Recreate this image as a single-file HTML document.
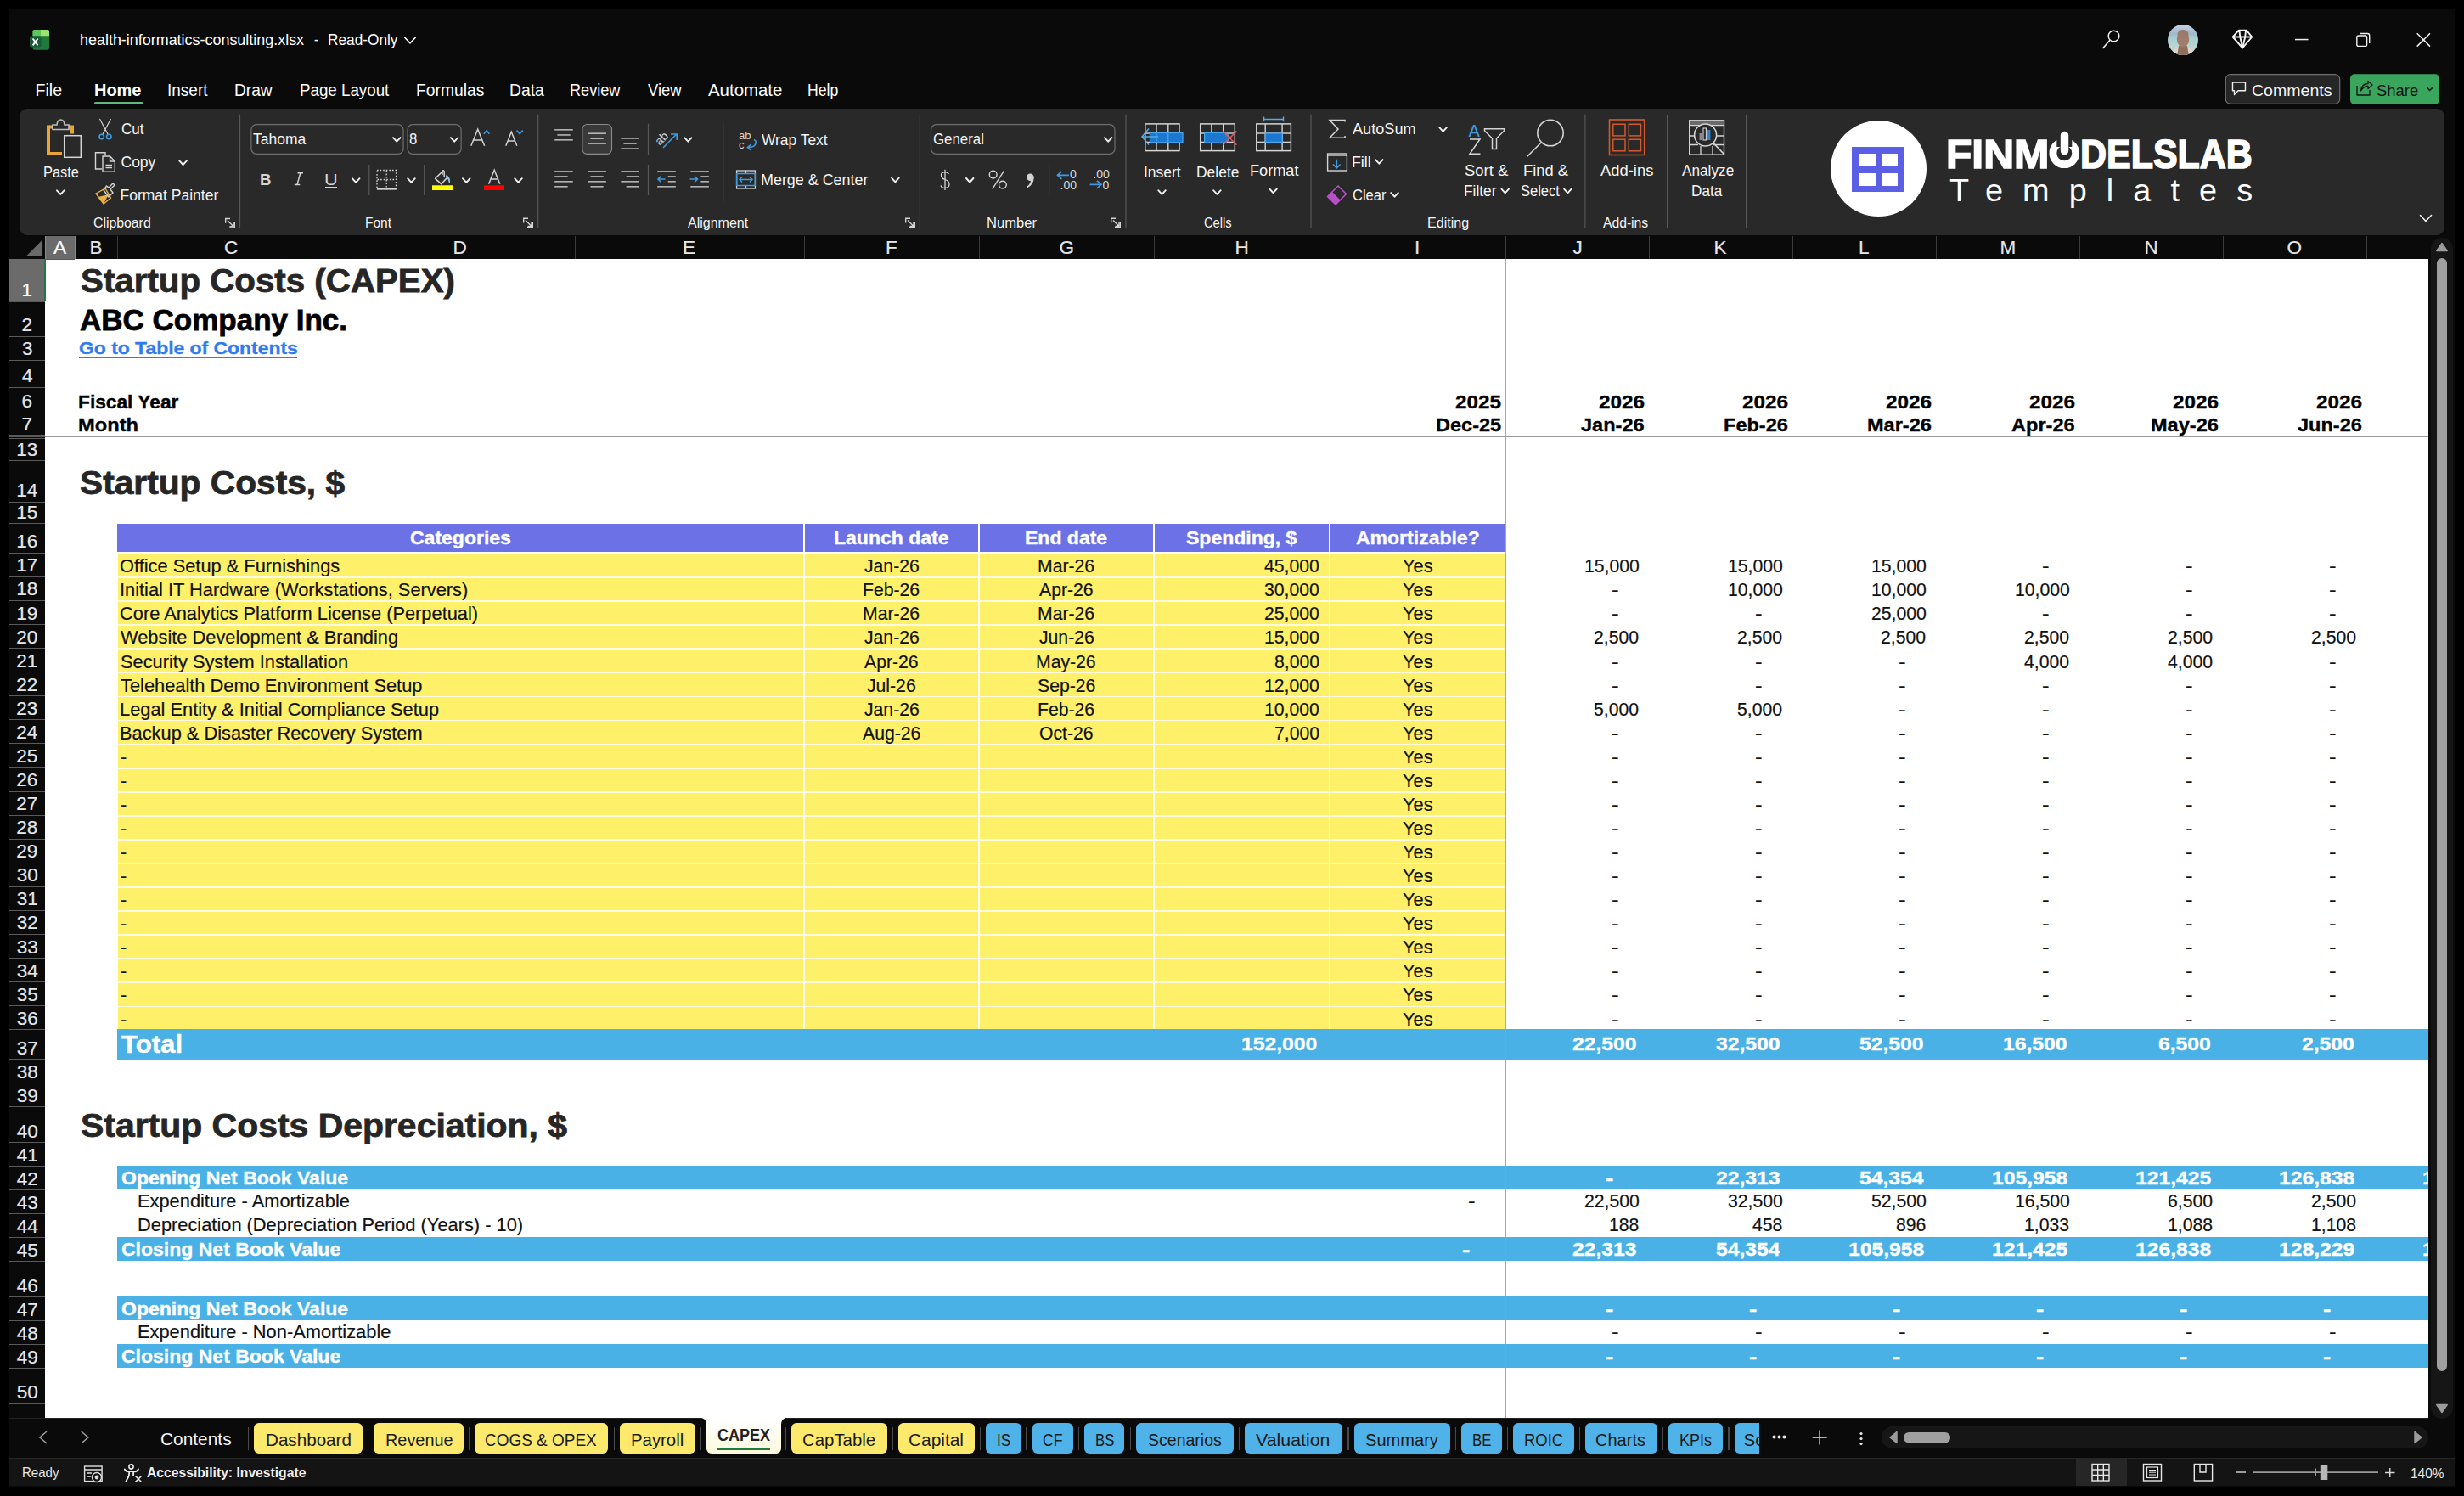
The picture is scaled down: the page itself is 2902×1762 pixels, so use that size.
<!DOCTYPE html><html><head><meta charset="utf-8"><style>html,body{margin:0;padding:0;width:2902px;height:1762px;overflow:hidden;background:#000;position:relative;font-family:"Liberation Sans",sans-serif}</style></head><body>
<div style="position:absolute;left:11.00px;top:11.00px;width:2880.00px;height:1740.00px;background:#0a0a0a;"></div>
<div style="position:absolute;left:23.00px;top:128.00px;width:2856.00px;height:149.00px;background:#292929;border-radius:9px;"></div>
<div style="position:absolute;left:11.00px;top:278.00px;width:2849.00px;height:27.00px;background:#0a0a0a;"></div>
<div style="position:absolute;left:53.00px;top:305.00px;width:2807.00px;height:1365.00px;background:#ffffff;"></div>
<div style="position:absolute;left:11.00px;top:305.00px;width:42.00px;height:1365.00px;background:#0a0a0a;"></div>
<div style="position:absolute;left:11.00px;top:1670.00px;width:2880.00px;height:48.00px;background:#0a0a0a;"></div>
<div style="position:absolute;left:11.00px;top:1718.00px;width:2880.00px;height:32.00px;background:#141414;"></div>
<div style="position:absolute;left:11.00px;top:1717.00px;width:2880.00px;height:1.00px;background:#262626;"></div>
<div style="position:absolute;left:94.38px;top:39.25px;font:normal 17.5px 'Liberation Sans',sans-serif;line-height:17.5px;color:#ffffff;white-space:nowrap;transform:scaleX(1.0246);transform-origin:0 0;">health-informatics-consulting.xlsx</div>
<div style="position:absolute;left:369.70px;top:39.25px;font:normal 17.5px 'Liberation Sans',sans-serif;line-height:17.5px;color:#ffffff;white-space:nowrap;transform:scaleX(0.8333);transform-origin:0 0;">-</div>
<div style="position:absolute;left:385.51px;top:39.25px;font:normal 17.5px 'Liberation Sans',sans-serif;line-height:17.5px;color:#ffffff;white-space:nowrap;transform:scaleX(0.9856);transform-origin:0 0;">Read-Only</div>
<div style="position:absolute;left:41.60px;top:97.25px;font:normal 19.5px 'Liberation Sans',sans-serif;line-height:19.5px;color:#ffffff;white-space:nowrap;">File</div>
<div style="position:absolute;left:110.78px;top:97.25px;font:bold 19.5px 'Liberation Sans',sans-serif;line-height:19.5px;color:#ffffff;white-space:nowrap;transform:scaleX(1.0238);transform-origin:0 0;">Home</div>
<div style="position:absolute;left:197.43px;top:97.25px;font:normal 19.5px 'Liberation Sans',sans-serif;line-height:19.5px;color:#ffffff;white-space:nowrap;transform:scaleX(0.9741);transform-origin:0 0;">Insert</div>
<div style="position:absolute;left:276.22px;top:97.25px;font:normal 19.5px 'Liberation Sans',sans-serif;line-height:19.5px;color:#ffffff;white-space:nowrap;transform:scaleX(0.9819);transform-origin:0 0;">Draw</div>
<div style="position:absolute;left:352.74px;top:97.25px;font:normal 19.5px 'Liberation Sans',sans-serif;line-height:19.5px;color:#ffffff;white-space:nowrap;transform:scaleX(0.9616);transform-origin:0 0;">Page Layout</div>
<div style="position:absolute;left:490.41px;top:97.25px;font:normal 19.5px 'Liberation Sans',sans-serif;line-height:19.5px;color:#ffffff;white-space:nowrap;transform:scaleX(0.9886);transform-origin:0 0;">Formulas</div>
<div style="position:absolute;left:599.51px;top:97.25px;font:normal 19.5px 'Liberation Sans',sans-serif;line-height:19.5px;color:#ffffff;white-space:nowrap;transform:scaleX(0.9890);transform-origin:0 0;">Data</div>
<div style="position:absolute;left:670.57px;top:97.25px;font:normal 19.5px 'Liberation Sans',sans-serif;line-height:19.5px;color:#ffffff;white-space:nowrap;transform:scaleX(0.9302);transform-origin:0 0;">Review</div>
<div style="position:absolute;left:762.50px;top:97.25px;font:normal 19.5px 'Liberation Sans',sans-serif;line-height:19.5px;color:#ffffff;white-space:nowrap;transform:scaleX(0.9432);transform-origin:0 0;">View</div>
<div style="position:absolute;left:834.40px;top:97.25px;font:normal 19.5px 'Liberation Sans',sans-serif;line-height:19.5px;color:#ffffff;white-space:nowrap;transform:scaleX(1.0470);transform-origin:0 0;">Automate</div>
<div style="position:absolute;left:950.60px;top:97.25px;font:normal 19.5px 'Liberation Sans',sans-serif;line-height:19.5px;color:#ffffff;white-space:nowrap;transform:scaleX(0.9042);transform-origin:0 0;">Help</div>
<div style="position:absolute;left:110.80px;top:120.00px;width:58.20px;height:3.20px;background:#5fb87f;border-radius:2px;"></div>
<svg style="position:absolute;left:0.00px;top:0.00px;pointer-events:none;" width="2902" height="130" viewBox="0 0 2902 130"><rect x="38.5" y="35" width="19.5" height="23.8" rx="2.2" fill="#1f7a3c"/><path d="M40.7 35 H47.5 V42.3 H38.5 V37.2 Q38.5 35 40.7 35 Z" fill="#5dc55a"/><path d="M47.5 35 H55.8 Q58 35 58 37.2 V42.3 H47.5 Z" fill="#9be36f"/><rect x="35" y="42.5" width="13.5" height="13" rx="2" fill="#185c37"/><path d="M38.6 45.5 L44.6 53.3 M44.6 45.5 L38.6 53.3" stroke="#fff" stroke-width="1.9"/><path d="M476.5 44 L483 50.8 L489.5 44" fill="none" stroke="#fff" stroke-width="1.6"/><circle cx="2489.5" cy="42.5" r="6.3" fill="none" stroke="#f0f0f0" stroke-width="1.5"/><path d="M2485 47.3 L2476.5 57" stroke="#f0f0f0" stroke-width="1.6"/><defs><linearGradient id="av" x1="0" y1="0" x2="0" y2="1"><stop offset="0" stop-color="#c8d2e6"/><stop offset="0.3" stop-color="#9fb8cc"/><stop offset="0.45" stop-color="#a9cfcf"/><stop offset="1" stop-color="#c8dcd8"/></linearGradient><clipPath id="avc"><circle cx="2571" cy="47" r="18"/></clipPath></defs><g clip-path="url(#avc)"><rect x="2553" y="29" width="36" height="36" fill="url(#av)"/><path d="M2556 66 Q2558 58 2566 56 L2576 56 Q2585 58 2587 66 Z" fill="#ddd3c8"/><path d="M2566 54 L2576 54 L2578 66 L2564 66 Z" fill="#8e6e5e"/><ellipse cx="2571" cy="46" rx="7.2" ry="9.5" fill="#a07c6c"/><ellipse cx="2571" cy="40" rx="6.5" ry="5" fill="#9a7a6c"/></g><path d="M2636.5 35.8 H2646 L2652.3 43.5 L2641.2 56.5 L2629.7 43.5 Z M2629.7 43.5 H2652.3 M2637.5 36 L2638.3 43.5 L2641.2 56.5 L2644.2 43.5 L2645 36" fill="none" stroke="#f4f4f4" stroke-width="1.9" stroke-linejoin="round"/><rect x="2703" y="45.8" width="15.5" height="1.5" fill="#f0f0f0"/><rect x="2775.8" y="42" width="11.8" height="12.4" rx="2" fill="none" stroke="#f0f0f0" stroke-width="1.4"/><path d="M2779 39.5 H2788.5 Q2790.7 39.5 2790.7 41.7 V51" fill="none" stroke="#f0f0f0" stroke-width="1.4"/><path d="M2846.7 39.3 L2862 54.6 M2862 39.3 L2846.7 54.6" stroke="#f0f0f0" stroke-width="1.5"/><rect x="2621.3" y="87.7" width="134.4" height="34.6" rx="5.5" fill="#262626" stroke="#707070" stroke-width="1.2"/><path d="M2629.5 97 H2644.5 V106.8 H2636 L2631.5 111.5 V106.8 H2629.5 Z" fill="none" stroke="#f0f0f0" stroke-width="1.4" stroke-linejoin="round"/><rect x="2768" y="87.2" width="105" height="35.5" rx="5" fill="#3aa55c"/><path d="M2776 101 V112 H2791 V106 M2780.5 107 Q2781.5 98.5 2789 98.5 V95.5 L2794 100 L2789 104.5 V101.5 Q2783.5 101.5 2780.5 107 Z" fill="none" stroke="#141414" stroke-width="1.3" stroke-linejoin="round"/><path d="M2858.3 103 L2861.7 106.5 L2865.1 103" fill="none" stroke="#141414" stroke-width="1.5"/></svg>
<div style="position:absolute;left:2652.00px;top:96.50px;font:normal 19px 'Liberation Sans',sans-serif;line-height:19px;color:#f4f4f4;white-space:nowrap;transform:scaleX(1.0290);transform-origin:0 0;">Comments</div>
<div style="position:absolute;left:2799.00px;top:96.50px;font:normal 19px 'Liberation Sans',sans-serif;line-height:19px;color:#141414;white-space:nowrap;transform:scaleX(0.9714);transform-origin:0 0;">Share</div>
<svg style="position:absolute;left:0.00px;top:0.00px;pointer-events:none;" width="2902" height="300" viewBox="0 0 2902 300"><path d="M58 149.5 H64 M79 149.5 H85 V157.5" fill="none" stroke="#e8a33a" stroke-width="4"/><path d="M57 147.5 V181 H73" fill="none" stroke="#e8a33a" stroke-width="4"/><path d="M62 152.5 V147 H67 Q67.5 141 71.5 141 Q75.5 141 76 147 H81 V152.5 Z" fill="#292929" stroke="#bdbdbd" stroke-width="1.6"/><rect x="75.7" y="159.7" width="19.6" height="25.6" fill="none" stroke="#d4d4d4" stroke-width="1.5"/><path d="M67.0 224.3 L71.3 228.9 L75.6 224.3" fill="none" stroke="#f0f0f0" stroke-width="1.9" stroke-linecap="round" stroke-linejoin="round"/><path d="M117.5 140 L127 158 M130.5 140 L121 158" fill="none" stroke="#d4d4d4" stroke-width="1.2"/><circle cx="119.7" cy="161" r="2.7" fill="none" stroke="#3f9be0" stroke-width="1.6"/><circle cx="128.3" cy="161" r="2.7" fill="none" stroke="#3f9be0" stroke-width="1.6"/><path d="M124 183 V179.7 H112.5 V199 H120" fill="none" stroke="#d4d4d4" stroke-width="1.4"/><path d="M121 184 H129.5 L135.3 190 V202.3 H121 Z M129.5 184 V190 H135.3 M124.5 194.5 H132 M124.5 197.5 H132" fill="none" stroke="#d4d4d4" stroke-width="1.4"/><path d="M113 228 L124 222 L130.5 233 L122 240 Z" fill="none" stroke="#e8b04a" stroke-width="1.4"/><path d="M115.5 232 L128 229 L122 240 Z" fill="#e8b04a"/><path d="M122 224 L128 232 L133 227 L130 223 L135 218 L133 216 L128 221 L125.5 219 Z" fill="none" stroke="#d4d4d4" stroke-width="1.4"/><path d="M211.3 189.4 L215.6 194.0 L219.9 189.4" fill="none" stroke="#f0f0f0" stroke-width="1.9" stroke-linecap="round" stroke-linejoin="round"/><path d="M265.7 262.8 V257.5 H271" fill="none" stroke="#d4d4d4" stroke-width="1.4"/><path d="M276.3 261.8 V268.1 H270" fill="none" stroke="#d4d4d4" stroke-width="1.4"/><path d="M268 259.8 L275 266.8 M275 262.3 V266.8 H270.5" fill="none" stroke="#d4d4d4" stroke-width="1.4"/><rect x="281.9" y="134.6" width="1.2" height="133.9" fill="#575757"/><rect x="295.9" y="146.7" width="179.1" height="34.6" rx="6" fill="none" stroke="#6e6e6e" stroke-width="1.2"/><rect x="480" y="146.7" width="63.1" height="34.6" rx="6" fill="none" stroke="#6e6e6e" stroke-width="1.2"/><path d="M463.0 162.1 L467.3 166.7 L471.6 162.1" fill="none" stroke="#f0f0f0" stroke-width="1.9" stroke-linecap="round" stroke-linejoin="round"/><path d="M530.9 162.1 L535.2 166.7 L539.5 162.1" fill="none" stroke="#f0f0f0" stroke-width="1.9" stroke-linecap="round" stroke-linejoin="round"/><path d="M554.8 171.7 L562.7 152.3 L570.6 171.7 M557.8 165 H567.6" fill="none" stroke="#d4d4d4" stroke-width="1.5"/><path d="M569.8 157.8 L573.1 153.8 L576.4 157.8" fill="none" stroke="#3f9be0" stroke-width="1.6"/><path d="M595.8 171.7 L602.3 155.2 L608.8 171.7 M598.3 166 H606.3" fill="none" stroke="#d4d4d4" stroke-width="1.5"/><path d="M608.6 153.6 L612.2 157.6 L615.8 153.6" fill="none" stroke="#3f9be0" stroke-width="1.6"/><path d="M350.5 203.8 H357 M346.8 217.4 H353.3 M353.8 203.8 L350 217.4" fill="none" stroke="#d4d4d4" stroke-width="1.5"/><path d="M414.9 210.2 L419.2 214.8 L423.5 210.2" fill="none" stroke="#f0f0f0" stroke-width="1.9" stroke-linecap="round" stroke-linejoin="round"/><rect x="434.2" y="194" width="1.2" height="36" fill="#575757"/><rect x="444" y="200.5" width="22.5" height="22" fill="none" stroke="#d4d4d4" stroke-width="1.3" stroke-dasharray="1.6 2"/><path d="M455.2 201 V222 M444.5 211.5 H466" fill="none" stroke="#d4d4d4" stroke-width="1.3" stroke-dasharray="1.6 2"/><rect x="443.9" y="221.6" width="22.9" height="2" fill="#d4d4d4"/><path d="M480.2 210.2 L484.5 214.8 L488.8 210.2" fill="none" stroke="#f0f0f0" stroke-width="1.9" stroke-linecap="round" stroke-linejoin="round"/><rect x="499.1" y="194" width="1.2" height="36" fill="#575757"/><path d="M520.3 202.8 L512.6 210.3 L519.7 216.7 L526.6 209.3" fill="none" stroke="#d4d4d4" stroke-width="1.6" stroke-linejoin="round"/><path d="M521 205.5 V201.8 Q522 199.8 523.2 201.8 V208.5" fill="none" stroke="#d4d4d4" stroke-width="1.5" stroke-linecap="round"/><path d="M525.8 206.4 Q530.3 208.5 529.5 215.5 Q528.2 210.5 525.8 208.3 Z" fill="#8fc3ea" stroke="#8fc3ea" stroke-width="1"/><rect x="509" y="218.3" width="24" height="5.7" fill="#ffff00"/><path d="M545.0 210.2 L549.3 214.8 L553.6 210.2" fill="none" stroke="#f0f0f0" stroke-width="1.9" stroke-linecap="round" stroke-linejoin="round"/><path d="M575.6 216.8 L582.2 200.3 L588.8 216.8 M578 211 H586.4" fill="none" stroke="#d4d4d4" stroke-width="1.5"/><rect x="570" y="218.3" width="24" height="5.7" fill="#ff0000"/><path d="M606.2 210.2 L610.5 214.8 L614.8 210.2" fill="none" stroke="#f0f0f0" stroke-width="1.9" stroke-linecap="round" stroke-linejoin="round"/><path d="M616.7 262.5 V257.2 H622" fill="none" stroke="#d4d4d4" stroke-width="1.4"/><path d="M627.3 261.5 V267.8 H621" fill="none" stroke="#d4d4d4" stroke-width="1.4"/><path d="M619 259.5 L626 266.5 M626 262.0 V266.5 H621.5" fill="none" stroke="#d4d4d4" stroke-width="1.4"/><rect x="633.1" y="134.6" width="1.2" height="133.9" fill="#575757"/><rect x="653.2" y="152.2" width="21.6" height="1.3" fill="#d4d4d4"/><rect x="656.4" y="158.3" width="15.3" height="1.3" fill="#d4d4d4"/><rect x="653.2" y="164.2" width="21.6" height="1.3" fill="#d4d4d4"/><rect x="685.9" y="146.5" width="34.6" height="34.9" rx="5.5" fill="#393939" stroke="#8c8c8c" stroke-width="1.1"/><rect x="692.0" y="156.5" width="21.9" height="1.3" fill="#d4d4d4"/><rect x="695.4" y="162.5" width="15.3" height="1.3" fill="#d4d4d4"/><rect x="692.0" y="168.4" width="21.9" height="1.3" fill="#d4d4d4"/><rect x="731.3" y="162.3" width="21.6" height="1.3" fill="#d4d4d4"/><rect x="734.4" y="168.4" width="15.3" height="1.3" fill="#d4d4d4"/><rect x="731.3" y="174.4" width="21.6" height="1.3" fill="#d4d4d4"/><rect x="762.9" y="145.6" width="1.2" height="36.900000000000006" fill="#575757"/><text x="0" y="0" transform="translate(777 172) rotate(-45)" font-family="Liberation Sans" font-size="14" fill="#d4d4d4">ab</text><path d="M781 174 L797 157.8 M790 158 H797.2 V165" fill="none" stroke="#3f9be0" stroke-width="1.6"/><path d="M806.4 162.3 L810.4 166.7 L814.4 162.3" fill="none" stroke="#f0f0f0" stroke-width="1.9" stroke-linecap="round" stroke-linejoin="round"/><rect x="653.2" y="201.3" width="21.6" height="1.3" fill="#d4d4d4"/><rect x="653.2" y="207.3" width="15.5" height="1.3" fill="#d4d4d4"/><rect x="653.2" y="213.2" width="21.6" height="1.3" fill="#d4d4d4"/><rect x="653.2" y="219.2" width="15.5" height="1.3" fill="#d4d4d4"/><rect x="692.0" y="201.3" width="21.9" height="1.3" fill="#d4d4d4"/><rect x="695.4" y="207.3" width="15.3" height="1.3" fill="#d4d4d4"/><rect x="692.0" y="213.2" width="21.9" height="1.3" fill="#d4d4d4"/><rect x="695.4" y="219.2" width="15.3" height="1.3" fill="#d4d4d4"/><rect x="731.3" y="201.3" width="21.6" height="1.3" fill="#d4d4d4"/><rect x="737.6" y="207.3" width="15.3" height="1.3" fill="#d4d4d4"/><rect x="731.3" y="213.2" width="21.6" height="1.3" fill="#d4d4d4"/><rect x="737.6" y="219.2" width="15.3" height="1.3" fill="#d4d4d4"/><rect x="762.9" y="194" width="1.2" height="36" fill="#575757"/><rect x="774.2" y="201.3" width="21.6" height="1.3" fill="#d4d4d4"/><rect x="786.7" y="207.3" width="9.1" height="1.3" fill="#d4d4d4"/><rect x="786.7" y="213.2" width="9.1" height="1.3" fill="#d4d4d4"/><rect x="774.2" y="219.2" width="21.6" height="1.3" fill="#d4d4d4"/><path d="M783.5 211 H775 M778.5 207.5 L775 211 L778.5 214.5" fill="none" stroke="#3f9be0" stroke-width="1.6"/><rect x="813.3" y="201.3" width="21.6" height="1.3" fill="#d4d4d4"/><rect x="825.4" y="207.3" width="9.5" height="1.3" fill="#d4d4d4"/><rect x="825.4" y="213.2" width="9.5" height="1.3" fill="#d4d4d4"/><rect x="813.3" y="219.2" width="21.6" height="1.3" fill="#d4d4d4"/><path d="M812.5 211 H821.5 M818 207.5 L821.5 211 L818 214.5" fill="none" stroke="#3f9be0" stroke-width="1.6"/><rect x="851.0" y="144" width="1.2" height="94" fill="#575757"/><text x="870" y="163.5" font-family="Liberation Sans" font-size="13" fill="#d4d4d4">ab</text><text x="870" y="174.5" font-family="Liberation Sans" font-size="13" fill="#d4d4d4">c</text><path d="M888 164.5 Q892 166 889 171 Q887 173.5 881 173.5 M884.5 170 L880.5 173.5 L884.5 177" fill="none" stroke="#3f9be0" stroke-width="1.6"/><rect x="867.6" y="201" width="21.8" height="21" fill="none" stroke="#d4d4d4" stroke-width="1.3"/><path d="M878.5 201 V204 M878.5 219 V222" stroke="#d4d4d4" stroke-width="1.2"/><rect x="867.6" y="204.5" width="21.8" height="14" fill="none" stroke="#3f9be0" stroke-width="1.5"/><path d="M871 211.5 H886 M874 208.5 L871 211.5 L874 214.5 M883 208.5 L886 211.5 L883 214.5" fill="none" stroke="#3f9be0" stroke-width="1.5"/><path d="M1050.1 209.7 L1054.4 214.3 L1058.7 209.7" fill="none" stroke="#f0f0f0" stroke-width="1.9" stroke-linecap="round" stroke-linejoin="round"/><path d="M1066.7 262.5 V257.2 H1072" fill="none" stroke="#d4d4d4" stroke-width="1.4"/><path d="M1077.3 261.5 V267.8 H1071" fill="none" stroke="#d4d4d4" stroke-width="1.4"/><path d="M1069 259.5 L1076 266.5 M1076 262.0 V266.5 H1071.5" fill="none" stroke="#d4d4d4" stroke-width="1.4"/><rect x="1082.8" y="134.6" width="1.2" height="133.9" fill="#575757"/><rect x="1096.5" y="146.7" width="216.5" height="34.6" rx="6" fill="none" stroke="#6e6e6e" stroke-width="1.2"/><path d="M1300.9 162.1 L1305.2 166.7 L1309.5 162.1" fill="none" stroke="#f0f0f0" stroke-width="1.9" stroke-linecap="round" stroke-linejoin="round"/><path d="M1138.0 210.0 L1142.2 214.6 L1146.4 210.0" fill="none" stroke="#f0f0f0" stroke-width="2" stroke-linecap="round" stroke-linejoin="round"/><rect x="1235.0" y="194" width="1.2" height="36" fill="#575757"/><path d="M1308.7 262.5 V257.2 H1314" fill="none" stroke="#d4d4d4" stroke-width="1.4"/><path d="M1319.3 261.5 V267.8 H1313" fill="none" stroke="#d4d4d4" stroke-width="1.4"/><path d="M1311 259.5 L1318 266.5 M1318 262.0 V266.5 H1313.5" fill="none" stroke="#d4d4d4" stroke-width="1.4"/><rect x="1325.4" y="134.6" width="1.2" height="133.9" fill="#575757"/><path d="M1117.5 205 Q1116 202.5 1113 202.5 Q1108.5 202.5 1108.5 206.5 Q1108.5 210 1113 211.5 Q1118 213 1118 217 Q1118 221.5 1113 221.5 Q1109 221.5 1108 218.5 M1113 199.8 V224" fill="none" stroke="#d4d4d4" stroke-width="1.3"/><circle cx="1169.7" cy="205.6" r="4.4" fill="none" stroke="#d4d4d4" stroke-width="1.4"/><circle cx="1180.9" cy="217.6" r="4.4" fill="none" stroke="#d4d4d4" stroke-width="1.4"/><path d="M1182.5 201.2 L1168.8 222.7" stroke="#d4d4d4" stroke-width="1.4"/><circle cx="1213.4" cy="208.8" r="4.3" fill="#d4d4d4"/><path d="M1217.6 208.5 Q1218 217 1209.8 221.5 L1209 220.3 Q1214.5 216 1213.8 211.5 Z" fill="#d4d4d4"/><path d="M1258.9 206.3 H1245.5 M1250.5 201.8 L1245.5 206.3 L1250.5 210.8" fill="none" stroke="#3f9be0" stroke-width="1.7"/><path d="M1283.6 217.3 H1297 M1292 212.8 L1297 217.3 L1292 221.8" fill="none" stroke="#3f9be0" stroke-width="1.7"/><g font-family="Liberation Sans" font-size="14" fill="#d4d4d4"><text x="1260" y="210.2">0</text><text x="1248.5" y="222.8">.00</text><text x="1287.3" y="210.2">.00</text><text x="1298.6" y="222.8">0</text></g><rect x="1348.8" y="145.9" width="40.200000000000045" height="31.69999999999999" fill="none" stroke="#d4d4d4" stroke-width="1.5"/><rect x="1361.3" y="145.9" width="1.4" height="31.69999999999999" fill="#d4d4d4"/><rect x="1375.1" y="145.9" width="1.4" height="31.69999999999999" fill="#d4d4d4"/><rect x="1348.8" y="156.3" width="40.200000000000045" height="1.4" fill="#d4d4d4"/><rect x="1348.8" y="166.70000000000002" width="40.200000000000045" height="1.4" fill="#d4d4d4"/><rect x="1354.5" y="156.5" width="38.5" height="11.4" fill="#1c77d0" stroke="#4aa8ee" stroke-width="1.2"/><path d="M1362 156.5 V168 M1375.8 156.5 V168" stroke="#4aa8ee" stroke-width="1.2"/><path d="M1345 161 H1364 M1353 151.5 L1345 161 L1353 170.5" fill="none" stroke="#5aaae0" stroke-width="1.5"/><rect x="1413.7" y="145.9" width="40.59999999999991" height="31.69999999999999" fill="none" stroke="#d4d4d4" stroke-width="1.5"/><rect x="1426.2" y="145.9" width="1.4" height="31.69999999999999" fill="#d4d4d4"/><rect x="1440.0" y="145.9" width="1.4" height="31.69999999999999" fill="#d4d4d4"/><rect x="1413.7" y="156.3" width="40.59999999999991" height="1.4" fill="#d4d4d4"/><rect x="1413.7" y="166.70000000000002" width="40.59999999999991" height="1.4" fill="#d4d4d4"/><path d="M1418.6 156.5 H1444 L1449 162 L1444 168 H1418.6 Z" fill="#1c77d0" stroke="#4aa8ee" stroke-width="1.2"/><path d="M1440.3 154.5 L1456.5 170.7 M1456.5 154.5 L1440.3 170.7" stroke="#e05a5a" stroke-width="1.6"/><rect x="1479.8" y="145.9" width="40.600000000000136" height="31.69999999999999" fill="none" stroke="#d4d4d4" stroke-width="1.5"/><rect x="1489.5" y="145.9" width="1.4" height="31.69999999999999" fill="#d4d4d4"/><rect x="1509.3999999999999" y="145.9" width="1.4" height="31.69999999999999" fill="#d4d4d4"/><rect x="1479.8" y="156.3" width="40.600000000000136" height="1.4" fill="#d4d4d4"/><rect x="1479.8" y="166.70000000000002" width="40.600000000000136" height="1.4" fill="#d4d4d4"/><rect x="1490.2" y="157" width="19.9" height="10.4" fill="#1c77d0" stroke="#4aa8ee" stroke-width="1.2"/><path d="M1488.5 140.4 H1511.5 M1488.5 137.5 V143.3 M1511.5 137.5 V143.3" fill="none" stroke="#5aaae0" stroke-width="1.5"/><path d="M1364.2 224.2 L1368.5 228.8 L1372.8 224.2" fill="none" stroke="#f0f0f0" stroke-width="1.9" stroke-linecap="round" stroke-linejoin="round"/><path d="M1429.1 224.2 L1433.4 228.8 L1437.7 224.2" fill="none" stroke="#f0f0f0" stroke-width="1.9" stroke-linecap="round" stroke-linejoin="round"/><path d="M1495.2 222.5 L1499.5 227.1 L1503.8 222.5" fill="none" stroke="#f0f0f0" stroke-width="1.9" stroke-linecap="round" stroke-linejoin="round"/><rect x="1543.4" y="134.6" width="1.2" height="133.9" fill="#575757"/><path d="M1584 143.5 V141.5 H1566 L1576 152 L1566 162.3 H1584 V160" fill="none" stroke="#d4d4d4" stroke-width="1.5"/><path d="M1695.3 150.2 L1699.6 154.8 L1703.9 150.2" fill="none" stroke="#f0f0f0" stroke-width="1.9" stroke-linecap="round" stroke-linejoin="round"/><rect x="1563.6" y="181" width="22.8" height="20" fill="none" stroke="#d4d4d4" stroke-width="1.4"/><rect x="1563.6" y="182.4" width="22.8" height="1.3" fill="#d4d4d4"/><path d="M1574.3 187.8 V197.5 M1570 193.5 L1574.3 197.8 L1578.6 193.5" fill="none" stroke="#3f9be0" stroke-width="1.6"/><path d="M1620.0 188.1 L1624.3 192.7 L1628.6 188.1" fill="none" stroke="#f0f0f0" stroke-width="1.9" stroke-linecap="round" stroke-linejoin="round"/><path d="M1576 219 L1585.5 228.5 L1573 241 L1563.5 231.5 Z" fill="none" stroke="#b84ec8" stroke-width="1.5"/><path d="M1569 226 L1578.5 235.5 L1573 241 L1563.5 231.5 Z" fill="#b84ec8"/><path d="M1638.2 227.1 L1642.5 231.7 L1646.8 227.1" fill="none" stroke="#f0f0f0" stroke-width="1.9" stroke-linecap="round" stroke-linejoin="round"/><text x="1729.5" y="160.5" font-family="Liberation Sans" font-size="20" fill="#3f9be0">A</text><path d="M1731 164 H1743 L1731 181.2 H1743.5" fill="none" stroke="#d4d4d4" stroke-width="1.5"/><path d="M1748.5 151.8 H1771.5 V154 L1762.5 163 V175.5 H1757.5 V163 L1748.5 154 Z" fill="none" stroke="#d4d4d4" stroke-width="1.5"/><path d="M1768.4 222.7 L1772.7 227.3 L1777.0 222.7" fill="none" stroke="#f0f0f0" stroke-width="1.9" stroke-linecap="round" stroke-linejoin="round"/><circle cx="1826" cy="156.6" r="15.2" fill="none" stroke="#d4d4d4" stroke-width="1.6"/><path d="M1815 168 L1798.5 184.5" stroke="#d4d4d4" stroke-width="1.6"/><path d="M1842.1 222.7 L1846.4 227.3 L1850.7 222.7" fill="none" stroke="#f0f0f0" stroke-width="1.9" stroke-linecap="round" stroke-linejoin="round"/><rect x="1866.3" y="134.6" width="1.2" height="133.9" fill="#575757"/><rect x="1895.5" y="141" width="41.2" height="41.5" fill="none" stroke="#d25a2e" stroke-width="1.6"/><rect x="1899.8" y="146.3" width="14.2" height="13.6" fill="none" stroke="#d25a2e" stroke-width="1.5"/><rect x="1918.3" y="146.3" width="14.2" height="13.6" fill="none" stroke="#d25a2e" stroke-width="1.5"/><rect x="1899.8" y="164.2" width="14.2" height="13.6" fill="none" stroke="#d25a2e" stroke-width="1.5"/><rect x="1918.3" y="164.2" width="14.2" height="13.6" fill="none" stroke="#d25a2e" stroke-width="1.5"/><rect x="1963.0" y="135.3" width="1.2" height="133.3" fill="#575757"/><rect x="1989.7" y="141.8" width="40.8" height="40.3" fill="none" stroke="#d4d4d4" stroke-width="1.4"/><rect x="1990" y="142" width="40" height="4.5" fill="#6a6a6a"/><path d="M1990 147.5 H2031 M1990 160 H1997 M2020 160 H2031 M1990 170.5 H2000 M2017 170.5 H2031 M2003 172 V182 M2017 172 V182" stroke="#d4d4d4" stroke-width="1.3"/><circle cx="2008.6" cy="159" r="13" fill="#292929" stroke="#d4d4d4" stroke-width="1.6"/><path d="M2018 168.5 L2030.5 181.5" stroke="#d4d4d4" stroke-width="1.8"/><rect x="2001.5" y="157" width="3" height="8" fill="#8a8a8a"/><rect x="2006" y="151" width="3.4" height="14" fill="none" stroke="#d4d4d4" stroke-width="1.1"/><rect x="2011" y="153" width="3.4" height="12" fill="#2a86d8"/><rect x="2056.0" y="135.3" width="1.2" height="133.3" fill="#575757"/><path d="M2850.5 253.5 L2857.0 260.5 L2863.5 253.5" fill="none" stroke="#f0f0f0" stroke-width="1.5" stroke-linecap="round" stroke-linejoin="round"/></svg>
<div style="position:absolute;left:51.06px;top:194.85px;font:normal 17.5px 'Liberation Sans',sans-serif;line-height:17.5px;color:#f4f4f4;white-space:nowrap;transform:scaleX(0.9368);transform-origin:0 0;">Paste</div>
<div style="position:absolute;left:142.50px;top:144.15px;font:normal 17.5px 'Liberation Sans',sans-serif;line-height:17.5px;color:#f4f4f4;white-space:nowrap;transform:scaleX(0.9682);transform-origin:0 0;">Cut</div>
<div style="position:absolute;left:142.50px;top:183.45px;font:normal 17.5px 'Liberation Sans',sans-serif;line-height:17.5px;color:#f4f4f4;white-space:nowrap;">Copy</div>
<div style="position:absolute;left:141.50px;top:221.95px;font:normal 17.5px 'Liberation Sans',sans-serif;line-height:17.5px;color:#f4f4f4;white-space:nowrap;">Format Painter</div>
<div style="position:absolute;left:109.50px;top:253.75px;font:normal 16.5px 'Liberation Sans',sans-serif;line-height:16.5px;color:#f4f4f4;white-space:nowrap;transform:scaleX(0.9582);transform-origin:0 0;">Clipboard</div>
<div style="position:absolute;left:298.30px;top:155.30px;font:normal 18px 'Liberation Sans',sans-serif;line-height:18px;color:#f4f4f4;white-space:nowrap;transform:scaleX(0.9704);transform-origin:0 0;">Tahoma</div>
<div style="position:absolute;left:482.40px;top:155.30px;font:normal 18px 'Liberation Sans',sans-serif;line-height:18px;color:#f4f4f4;white-space:nowrap;transform:scaleX(0.9300);transform-origin:0 0;">8</div>
<div style="position:absolute;left:306.32px;top:201.80px;font:bold 19px 'Liberation Sans',sans-serif;line-height:19px;color:#d4d4d4;white-space:nowrap;transform:scaleX(0.9833);transform-origin:0 0;">B</div>
<div style="position:absolute;left:381.86px;top:201.80px;font:normal 19px 'Liberation Sans',sans-serif;line-height:19px;color:#d4d4d4;white-space:nowrap;transform:scaleX(1.1417);transform-origin:0 0;">U</div>
<div style="position:absolute;left:382.50px;top:219.70px;width:14.50px;height:1.40px;background:#d4d4d4;"></div>
<div style="position:absolute;left:429.56px;top:253.55px;font:normal 16.5px 'Liberation Sans',sans-serif;line-height:16.5px;color:#f4f4f4;white-space:nowrap;transform:scaleX(0.9404);transform-origin:0 0;">Font</div>
<div style="position:absolute;left:897.00px;top:156.75px;font:normal 17.5px 'Liberation Sans',sans-serif;line-height:17.5px;color:#f4f4f4;white-space:nowrap;transform:scaleX(0.9925);transform-origin:0 0;">Wrap Text</div>
<div style="position:absolute;left:896.38px;top:204.25px;font:normal 17.5px 'Liberation Sans',sans-serif;line-height:17.5px;color:#f4f4f4;white-space:nowrap;transform:scaleX(1.0237);transform-origin:0 0;">Merge &amp; Center</div>
<div style="position:absolute;left:810.00px;top:253.75px;font:normal 16.5px 'Liberation Sans',sans-serif;line-height:16.5px;color:#f4f4f4;white-space:nowrap;transform:scaleX(0.9704);transform-origin:0 0;">Alignment</div>
<div style="position:absolute;left:1099.00px;top:155.30px;font:normal 18px 'Liberation Sans',sans-serif;line-height:18px;color:#f4f4f4;white-space:nowrap;transform:scaleX(0.9359);transform-origin:0 0;">General</div>
<div style="position:absolute;left:1161.60px;top:253.75px;font:normal 16.5px 'Liberation Sans',sans-serif;line-height:16.5px;color:#f4f4f4;white-space:nowrap;transform:scaleX(1.0036);transform-origin:0 0;">Number</div>
<div style="position:absolute;left:1346.90px;top:195.15px;font:normal 17.5px 'Liberation Sans',sans-serif;line-height:17.5px;color:#f4f4f4;white-space:nowrap;">Insert</div>
<div style="position:absolute;left:1409.30px;top:195.15px;font:normal 17.5px 'Liberation Sans',sans-serif;line-height:17.5px;color:#f4f4f4;white-space:nowrap;transform:scaleX(0.9969);transform-origin:0 0;">Delete</div>
<div style="position:absolute;left:1471.66px;top:193.45px;font:normal 17.5px 'Liberation Sans',sans-serif;line-height:17.5px;color:#f4f4f4;white-space:nowrap;transform:scaleX(1.0374);transform-origin:0 0;">Format</div>
<div style="position:absolute;left:1418.00px;top:253.75px;font:normal 16.5px 'Liberation Sans',sans-serif;line-height:16.5px;color:#f4f4f4;white-space:nowrap;transform:scaleX(0.8895);transform-origin:0 0;">Cells</div>
<div style="position:absolute;left:1592.90px;top:144.05px;font:normal 17.5px 'Liberation Sans',sans-serif;line-height:17.5px;color:#f4f4f4;white-space:nowrap;transform:scaleX(1.0363);transform-origin:0 0;">AutoSum</div>
<div style="position:absolute;left:1591.89px;top:182.75px;font:normal 17.5px 'Liberation Sans',sans-serif;line-height:17.5px;color:#f4f4f4;white-space:nowrap;transform:scaleX(1.0115);transform-origin:0 0;">Fill</div>
<div style="position:absolute;left:1592.90px;top:221.75px;font:normal 17.5px 'Liberation Sans',sans-serif;line-height:17.5px;color:#f4f4f4;white-space:nowrap;transform:scaleX(0.9431);transform-origin:0 0;">Clear</div>
<div style="position:absolute;left:1725.30px;top:193.15px;font:normal 17.5px 'Liberation Sans',sans-serif;line-height:17.5px;color:#f4f4f4;white-space:nowrap;transform:scaleX(1.0560);transform-origin:0 0;">Sort &amp;</div>
<div style="position:absolute;left:1723.71px;top:216.85px;font:normal 17.5px 'Liberation Sans',sans-serif;line-height:17.5px;color:#f4f4f4;white-space:nowrap;transform:scaleX(0.9879);transform-origin:0 0;">Filter</div>
<div style="position:absolute;left:1794.45px;top:193.15px;font:normal 17.5px 'Liberation Sans',sans-serif;line-height:17.5px;color:#f4f4f4;white-space:nowrap;transform:scaleX(1.0460);transform-origin:0 0;">Find &amp;</div>
<div style="position:absolute;left:1790.50px;top:216.85px;font:normal 17.5px 'Liberation Sans',sans-serif;line-height:17.5px;color:#f4f4f4;white-space:nowrap;transform:scaleX(0.9410);transform-origin:0 0;">Select</div>
<div style="position:absolute;left:1681.03px;top:254.25px;font:normal 16.5px 'Liberation Sans',sans-serif;line-height:16.5px;color:#f4f4f4;white-space:nowrap;transform:scaleX(0.9741);transform-origin:0 0;">Editing</div>
<div style="position:absolute;left:1885.00px;top:192.85px;font:normal 17.5px 'Liberation Sans',sans-serif;line-height:17.5px;color:#f4f4f4;white-space:nowrap;transform:scaleX(1.0506);transform-origin:0 0;">Add-ins</div>
<div style="position:absolute;left:1888.40px;top:254.35px;font:normal 16.5px 'Liberation Sans',sans-serif;line-height:16.5px;color:#f4f4f4;white-space:nowrap;transform:scaleX(0.9498);transform-origin:0 0;">Add-ins</div>
<div style="position:absolute;left:1980.50px;top:192.85px;font:normal 17.5px 'Liberation Sans',sans-serif;line-height:17.5px;color:#f4f4f4;white-space:nowrap;transform:scaleX(0.9833);transform-origin:0 0;">Analyze</div>
<div style="position:absolute;left:1992.02px;top:216.55px;font:normal 17.5px 'Liberation Sans',sans-serif;line-height:17.5px;color:#f4f4f4;white-space:nowrap;transform:scaleX(0.9798);transform-origin:0 0;">Data</div>
<div style="position:absolute;left:2156px;top:142px;width:113px;height:113px;border-radius:50%;background:#fff"></div>
<div style="position:absolute;left:2181.00px;top:173.00px;width:62.00px;height:52.60px;background:#5b5fe6;"></div>
<div style="position:absolute;left:2189.50px;top:180.70px;width:19.50px;height:15.00px;background:#ffffff;"></div>
<div style="position:absolute;left:2189.50px;top:203.50px;width:19.50px;height:15.00px;background:#ffffff;"></div>
<div style="position:absolute;left:2215.60px;top:180.70px;width:19.50px;height:15.00px;background:#ffffff;"></div>
<div style="position:absolute;left:2215.60px;top:203.50px;width:19.50px;height:15.00px;background:#ffffff;"></div>
<div style="position:absolute;left:2291.66px;top:156.50px;font:bold 49px 'Liberation Sans',sans-serif;line-height:49px;color:#fff;white-space:nowrap;transform:scaleX(1.0138);transform-origin:0 0;-webkit-text-stroke:1.6px #fff;">FINM</div>
<div style="position:absolute;left:2449.97px;top:156.50px;font:bold 49px 'Liberation Sans',sans-serif;line-height:49px;color:#fff;white-space:nowrap;transform:scaleX(0.8767);transform-origin:0 0;-webkit-text-stroke:1.6px #fff;">DELSLAB</div>
<svg style="position:absolute;left:2400.00px;top:145.00px;" width="60" height="60" viewBox="0 0 60 60"><circle cx="31.3" cy="35.3" r="13.4" fill="none" stroke="#fff" stroke-width="8.8"/><rect x="22.3" y="12" width="18" height="16" fill="#292929"/><rect x="26.8" y="9.7" width="9.4" height="27.7" rx="4.7" fill="#fff"/></svg>
<div style="position:absolute;left:2296.00px;top:207.10px;font:normal 36px 'Liberation Sans',sans-serif;line-height:36px;color:#fff;white-space:nowrap;letter-spacing:22px;transform:scaleX(1.0499);transform-origin:0 0;">Templates</div>
<div style="position:absolute;left:30.50px;top:282.50px;width:19.50px;height:19.50px;background:#6a6a6a;clip-path:polygon(100% 0,100% 100%,0 100%);"></div>
<div style="position:absolute;left:53.00px;top:278.00px;width:35.00px;height:27.00px;background:#6b6b6b;"></div>
<div style="position:absolute;left:87.50px;top:278.00px;width:1.00px;height:27.00px;background:#8a8a8a;"></div>
<div style="position:absolute;left:63.00px;top:281.25px;font:normal 22.5px 'Liberation Sans',sans-serif;line-height:22.5px;color:#ffffff;white-space:nowrap;-webkit-text-stroke:0.2px currentColor;">A</div>
<div style="position:absolute;left:137.50px;top:278.00px;width:1.00px;height:27.00px;background:#3c3c3c;"></div>
<div style="position:absolute;left:105.50px;top:281.25px;font:normal 22.5px 'Liberation Sans',sans-serif;line-height:22.5px;color:#e6e6e6;white-space:nowrap;-webkit-text-stroke:0.2px currentColor;">B</div>
<div style="position:absolute;left:406.50px;top:278.00px;width:1.00px;height:27.00px;background:#3c3c3c;"></div>
<div style="position:absolute;left:264.00px;top:281.25px;font:normal 22.5px 'Liberation Sans',sans-serif;line-height:22.5px;color:#e6e6e6;white-space:nowrap;-webkit-text-stroke:0.2px currentColor;">C</div>
<div style="position:absolute;left:676.50px;top:278.00px;width:1.00px;height:27.00px;background:#3c3c3c;"></div>
<div style="position:absolute;left:533.50px;top:281.25px;font:normal 22.5px 'Liberation Sans',sans-serif;line-height:22.5px;color:#e6e6e6;white-space:nowrap;-webkit-text-stroke:0.2px currentColor;">D</div>
<div style="position:absolute;left:946.50px;top:278.00px;width:1.00px;height:27.00px;background:#3c3c3c;"></div>
<div style="position:absolute;left:804.00px;top:281.25px;font:normal 22.5px 'Liberation Sans',sans-serif;line-height:22.5px;color:#e6e6e6;white-space:nowrap;-webkit-text-stroke:0.2px currentColor;">E</div>
<div style="position:absolute;left:1152.50px;top:278.00px;width:1.00px;height:27.00px;background:#3c3c3c;"></div>
<div style="position:absolute;left:1043.00px;top:281.25px;font:normal 22.5px 'Liberation Sans',sans-serif;line-height:22.5px;color:#e6e6e6;white-space:nowrap;-webkit-text-stroke:0.2px currentColor;">F</div>
<div style="position:absolute;left:1358.50px;top:278.00px;width:1.00px;height:27.00px;background:#3c3c3c;"></div>
<div style="position:absolute;left:1247.50px;top:281.25px;font:normal 22.5px 'Liberation Sans',sans-serif;line-height:22.5px;color:#e6e6e6;white-space:nowrap;-webkit-text-stroke:0.2px currentColor;">G</div>
<div style="position:absolute;left:1565.50px;top:278.00px;width:1.00px;height:27.00px;background:#3c3c3c;"></div>
<div style="position:absolute;left:1454.50px;top:281.25px;font:normal 22.5px 'Liberation Sans',sans-serif;line-height:22.5px;color:#e6e6e6;white-space:nowrap;-webkit-text-stroke:0.2px currentColor;">H</div>
<div style="position:absolute;left:1772.50px;top:278.00px;width:1.00px;height:27.00px;background:#3c3c3c;"></div>
<div style="position:absolute;left:1666.00px;top:281.25px;font:normal 22.5px 'Liberation Sans',sans-serif;line-height:22.5px;color:#e6e6e6;white-space:nowrap;-webkit-text-stroke:0.2px currentColor;">I</div>
<div style="position:absolute;left:1941.50px;top:278.00px;width:1.00px;height:27.00px;background:#3c3c3c;"></div>
<div style="position:absolute;left:1852.50px;top:281.25px;font:normal 22.5px 'Liberation Sans',sans-serif;line-height:22.5px;color:#e6e6e6;white-space:nowrap;-webkit-text-stroke:0.2px currentColor;">J</div>
<div style="position:absolute;left:2110.50px;top:278.00px;width:1.00px;height:27.00px;background:#3c3c3c;"></div>
<div style="position:absolute;left:2018.50px;top:281.25px;font:normal 22.5px 'Liberation Sans',sans-serif;line-height:22.5px;color:#e6e6e6;white-space:nowrap;-webkit-text-stroke:0.2px currentColor;">K</div>
<div style="position:absolute;left:2279.50px;top:278.00px;width:1.00px;height:27.00px;background:#3c3c3c;"></div>
<div style="position:absolute;left:2189.00px;top:281.25px;font:normal 22.5px 'Liberation Sans',sans-serif;line-height:22.5px;color:#e6e6e6;white-space:nowrap;-webkit-text-stroke:0.2px currentColor;">L</div>
<div style="position:absolute;left:2448.50px;top:278.00px;width:1.00px;height:27.00px;background:#3c3c3c;"></div>
<div style="position:absolute;left:2355.50px;top:281.25px;font:normal 22.5px 'Liberation Sans',sans-serif;line-height:22.5px;color:#e6e6e6;white-space:nowrap;-webkit-text-stroke:0.2px currentColor;">M</div>
<div style="position:absolute;left:2617.50px;top:278.00px;width:1.00px;height:27.00px;background:#3c3c3c;"></div>
<div style="position:absolute;left:2525.50px;top:281.25px;font:normal 22.5px 'Liberation Sans',sans-serif;line-height:22.5px;color:#e6e6e6;white-space:nowrap;-webkit-text-stroke:0.2px currentColor;">N</div>
<div style="position:absolute;left:2786.50px;top:278.00px;width:1.00px;height:27.00px;background:#3c3c3c;"></div>
<div style="position:absolute;left:2693.50px;top:281.25px;font:normal 22.5px 'Liberation Sans',sans-serif;line-height:22.5px;color:#e6e6e6;white-space:nowrap;-webkit-text-stroke:0.2px currentColor;">O</div>
<div style="position:absolute;left:2955.50px;top:278.00px;width:1.00px;height:27.00px;background:#3c3c3c;"></div>
<div style="position:absolute;left:52.50px;top:278.00px;width:1.00px;height:27.00px;background:#8a8a8a;"></div>
<div style="position:absolute;left:11.00px;top:305.00px;width:42.00px;height:50.00px;background:#6b6b6b;"></div>
<div style="position:absolute;left:11.00px;top:354.50px;width:42.00px;height:1.00px;background:#5a5a5a;"></div>
<div style="position:absolute;left:25.50px;top:331.05px;font:normal 22.5px 'Liberation Sans',sans-serif;line-height:22.5px;color:#ffffff;white-space:nowrap;-webkit-text-stroke:0.2px currentColor;">1</div>
<div style="position:absolute;left:11.00px;top:395.50px;width:42.00px;height:1.00px;background:#5a5a5a;"></div>
<div style="position:absolute;left:25.50px;top:372.05px;font:normal 22.5px 'Liberation Sans',sans-serif;line-height:22.5px;color:#e6e6e6;white-space:nowrap;-webkit-text-stroke:0.2px currentColor;">2</div>
<div style="position:absolute;left:11.00px;top:423.90px;width:42.00px;height:1.00px;background:#5a5a5a;"></div>
<div style="position:absolute;left:26.00px;top:400.45px;font:normal 22.5px 'Liberation Sans',sans-serif;line-height:22.5px;color:#e6e6e6;white-space:nowrap;-webkit-text-stroke:0.2px currentColor;">3</div>
<div style="position:absolute;left:11.00px;top:455.90px;width:42.00px;height:1.00px;background:#5a5a5a;"></div>
<div style="position:absolute;left:26.00px;top:432.45px;font:normal 22.5px 'Liberation Sans',sans-serif;line-height:22.5px;color:#e6e6e6;white-space:nowrap;-webkit-text-stroke:0.2px currentColor;">4</div>
<div style="position:absolute;left:11.00px;top:485.80px;width:42.00px;height:1.00px;background:#5a5a5a;"></div>
<div style="position:absolute;left:25.50px;top:462.35px;font:normal 22.5px 'Liberation Sans',sans-serif;line-height:22.5px;color:#e6e6e6;white-space:nowrap;-webkit-text-stroke:0.2px currentColor;">6</div>
<div style="position:absolute;left:11.00px;top:512.30px;width:42.00px;height:1.00px;background:#5a5a5a;"></div>
<div style="position:absolute;left:25.50px;top:488.85px;font:normal 22.5px 'Liberation Sans',sans-serif;line-height:22.5px;color:#e6e6e6;white-space:nowrap;-webkit-text-stroke:0.2px currentColor;">7</div>
<div style="position:absolute;left:11.00px;top:542.00px;width:42.00px;height:1.00px;background:#5a5a5a;"></div>
<div style="position:absolute;left:19.24px;top:518.55px;font:normal 22.5px 'Liberation Sans',sans-serif;line-height:22.5px;color:#e6e6e6;white-space:nowrap;-webkit-text-stroke:0.2px currentColor;">13</div>
<div style="position:absolute;left:11.00px;top:590.50px;width:42.00px;height:1.00px;background:#5a5a5a;"></div>
<div style="position:absolute;left:19.24px;top:567.05px;font:normal 22.5px 'Liberation Sans',sans-serif;line-height:22.5px;color:#e6e6e6;white-space:nowrap;-webkit-text-stroke:0.2px currentColor;">14</div>
<div style="position:absolute;left:11.00px;top:616.10px;width:42.00px;height:1.00px;background:#5a5a5a;"></div>
<div style="position:absolute;left:19.24px;top:592.65px;font:normal 22.5px 'Liberation Sans',sans-serif;line-height:22.5px;color:#e6e6e6;white-space:nowrap;-webkit-text-stroke:0.2px currentColor;">15</div>
<div style="position:absolute;left:11.00px;top:650.80px;width:42.00px;height:1.00px;background:#5a5a5a;"></div>
<div style="position:absolute;left:19.24px;top:627.35px;font:normal 22.5px 'Liberation Sans',sans-serif;line-height:22.5px;color:#e6e6e6;white-space:nowrap;-webkit-text-stroke:0.2px currentColor;">16</div>
<div style="position:absolute;left:11.00px;top:678.87px;width:42.00px;height:1.00px;background:#5a5a5a;"></div>
<div style="position:absolute;left:19.24px;top:655.42px;font:normal 22.5px 'Liberation Sans',sans-serif;line-height:22.5px;color:#e6e6e6;white-space:nowrap;-webkit-text-stroke:0.2px currentColor;">17</div>
<div style="position:absolute;left:11.00px;top:706.94px;width:42.00px;height:1.00px;background:#5a5a5a;"></div>
<div style="position:absolute;left:19.24px;top:683.49px;font:normal 22.5px 'Liberation Sans',sans-serif;line-height:22.5px;color:#e6e6e6;white-space:nowrap;-webkit-text-stroke:0.2px currentColor;">18</div>
<div style="position:absolute;left:11.00px;top:735.01px;width:42.00px;height:1.00px;background:#5a5a5a;"></div>
<div style="position:absolute;left:19.24px;top:711.56px;font:normal 22.5px 'Liberation Sans',sans-serif;line-height:22.5px;color:#e6e6e6;white-space:nowrap;-webkit-text-stroke:0.2px currentColor;">19</div>
<div style="position:absolute;left:11.00px;top:763.08px;width:42.00px;height:1.00px;background:#5a5a5a;"></div>
<div style="position:absolute;left:19.24px;top:739.63px;font:normal 22.5px 'Liberation Sans',sans-serif;line-height:22.5px;color:#e6e6e6;white-space:nowrap;-webkit-text-stroke:0.2px currentColor;">20</div>
<div style="position:absolute;left:11.00px;top:791.15px;width:42.00px;height:1.00px;background:#5a5a5a;"></div>
<div style="position:absolute;left:19.24px;top:767.70px;font:normal 22.5px 'Liberation Sans',sans-serif;line-height:22.5px;color:#e6e6e6;white-space:nowrap;-webkit-text-stroke:0.2px currentColor;">21</div>
<div style="position:absolute;left:11.00px;top:819.22px;width:42.00px;height:1.00px;background:#5a5a5a;"></div>
<div style="position:absolute;left:19.24px;top:795.77px;font:normal 22.5px 'Liberation Sans',sans-serif;line-height:22.5px;color:#e6e6e6;white-space:nowrap;-webkit-text-stroke:0.2px currentColor;">22</div>
<div style="position:absolute;left:11.00px;top:847.29px;width:42.00px;height:1.00px;background:#5a5a5a;"></div>
<div style="position:absolute;left:19.24px;top:823.84px;font:normal 22.5px 'Liberation Sans',sans-serif;line-height:22.5px;color:#e6e6e6;white-space:nowrap;-webkit-text-stroke:0.2px currentColor;">23</div>
<div style="position:absolute;left:11.00px;top:875.36px;width:42.00px;height:1.00px;background:#5a5a5a;"></div>
<div style="position:absolute;left:19.24px;top:851.91px;font:normal 22.5px 'Liberation Sans',sans-serif;line-height:22.5px;color:#e6e6e6;white-space:nowrap;-webkit-text-stroke:0.2px currentColor;">24</div>
<div style="position:absolute;left:11.00px;top:903.43px;width:42.00px;height:1.00px;background:#5a5a5a;"></div>
<div style="position:absolute;left:19.24px;top:879.98px;font:normal 22.5px 'Liberation Sans',sans-serif;line-height:22.5px;color:#e6e6e6;white-space:nowrap;-webkit-text-stroke:0.2px currentColor;">25</div>
<div style="position:absolute;left:11.00px;top:931.50px;width:42.00px;height:1.00px;background:#5a5a5a;"></div>
<div style="position:absolute;left:19.24px;top:908.05px;font:normal 22.5px 'Liberation Sans',sans-serif;line-height:22.5px;color:#e6e6e6;white-space:nowrap;-webkit-text-stroke:0.2px currentColor;">26</div>
<div style="position:absolute;left:11.00px;top:959.57px;width:42.00px;height:1.00px;background:#5a5a5a;"></div>
<div style="position:absolute;left:19.24px;top:936.12px;font:normal 22.5px 'Liberation Sans',sans-serif;line-height:22.5px;color:#e6e6e6;white-space:nowrap;-webkit-text-stroke:0.2px currentColor;">27</div>
<div style="position:absolute;left:11.00px;top:987.64px;width:42.00px;height:1.00px;background:#5a5a5a;"></div>
<div style="position:absolute;left:19.24px;top:964.19px;font:normal 22.5px 'Liberation Sans',sans-serif;line-height:22.5px;color:#e6e6e6;white-space:nowrap;-webkit-text-stroke:0.2px currentColor;">28</div>
<div style="position:absolute;left:11.00px;top:1015.71px;width:42.00px;height:1.00px;background:#5a5a5a;"></div>
<div style="position:absolute;left:19.24px;top:992.26px;font:normal 22.5px 'Liberation Sans',sans-serif;line-height:22.5px;color:#e6e6e6;white-space:nowrap;-webkit-text-stroke:0.2px currentColor;">29</div>
<div style="position:absolute;left:11.00px;top:1043.78px;width:42.00px;height:1.00px;background:#5a5a5a;"></div>
<div style="position:absolute;left:19.74px;top:1020.33px;font:normal 22.5px 'Liberation Sans',sans-serif;line-height:22.5px;color:#e6e6e6;white-space:nowrap;-webkit-text-stroke:0.2px currentColor;">30</div>
<div style="position:absolute;left:11.00px;top:1071.85px;width:42.00px;height:1.00px;background:#5a5a5a;"></div>
<div style="position:absolute;left:19.74px;top:1048.40px;font:normal 22.5px 'Liberation Sans',sans-serif;line-height:22.5px;color:#e6e6e6;white-space:nowrap;-webkit-text-stroke:0.2px currentColor;">31</div>
<div style="position:absolute;left:11.00px;top:1099.92px;width:42.00px;height:1.00px;background:#5a5a5a;"></div>
<div style="position:absolute;left:19.74px;top:1076.47px;font:normal 22.5px 'Liberation Sans',sans-serif;line-height:22.5px;color:#e6e6e6;white-space:nowrap;-webkit-text-stroke:0.2px currentColor;">32</div>
<div style="position:absolute;left:11.00px;top:1127.99px;width:42.00px;height:1.00px;background:#5a5a5a;"></div>
<div style="position:absolute;left:19.74px;top:1104.54px;font:normal 22.5px 'Liberation Sans',sans-serif;line-height:22.5px;color:#e6e6e6;white-space:nowrap;-webkit-text-stroke:0.2px currentColor;">33</div>
<div style="position:absolute;left:11.00px;top:1156.06px;width:42.00px;height:1.00px;background:#5a5a5a;"></div>
<div style="position:absolute;left:19.74px;top:1132.61px;font:normal 22.5px 'Liberation Sans',sans-serif;line-height:22.5px;color:#e6e6e6;white-space:nowrap;-webkit-text-stroke:0.2px currentColor;">34</div>
<div style="position:absolute;left:11.00px;top:1184.13px;width:42.00px;height:1.00px;background:#5a5a5a;"></div>
<div style="position:absolute;left:19.74px;top:1160.68px;font:normal 22.5px 'Liberation Sans',sans-serif;line-height:22.5px;color:#e6e6e6;white-space:nowrap;-webkit-text-stroke:0.2px currentColor;">35</div>
<div style="position:absolute;left:11.00px;top:1212.20px;width:42.00px;height:1.00px;background:#5a5a5a;"></div>
<div style="position:absolute;left:19.74px;top:1188.75px;font:normal 22.5px 'Liberation Sans',sans-serif;line-height:22.5px;color:#e6e6e6;white-space:nowrap;-webkit-text-stroke:0.2px currentColor;">36</div>
<div style="position:absolute;left:11.00px;top:1247.00px;width:42.00px;height:1.00px;background:#5a5a5a;"></div>
<div style="position:absolute;left:19.74px;top:1223.55px;font:normal 22.5px 'Liberation Sans',sans-serif;line-height:22.5px;color:#e6e6e6;white-space:nowrap;-webkit-text-stroke:0.2px currentColor;">37</div>
<div style="position:absolute;left:11.00px;top:1275.00px;width:42.00px;height:1.00px;background:#5a5a5a;"></div>
<div style="position:absolute;left:19.74px;top:1251.55px;font:normal 22.5px 'Liberation Sans',sans-serif;line-height:22.5px;color:#e6e6e6;white-space:nowrap;-webkit-text-stroke:0.2px currentColor;">38</div>
<div style="position:absolute;left:11.00px;top:1303.00px;width:42.00px;height:1.00px;background:#5a5a5a;"></div>
<div style="position:absolute;left:19.74px;top:1279.55px;font:normal 22.5px 'Liberation Sans',sans-serif;line-height:22.5px;color:#e6e6e6;white-space:nowrap;-webkit-text-stroke:0.2px currentColor;">39</div>
<div style="position:absolute;left:11.00px;top:1345.00px;width:42.00px;height:1.00px;background:#5a5a5a;"></div>
<div style="position:absolute;left:19.74px;top:1321.55px;font:normal 22.5px 'Liberation Sans',sans-serif;line-height:22.5px;color:#e6e6e6;white-space:nowrap;-webkit-text-stroke:0.2px currentColor;">40</div>
<div style="position:absolute;left:11.00px;top:1373.00px;width:42.00px;height:1.00px;background:#5a5a5a;"></div>
<div style="position:absolute;left:19.74px;top:1349.55px;font:normal 22.5px 'Liberation Sans',sans-serif;line-height:22.5px;color:#e6e6e6;white-space:nowrap;-webkit-text-stroke:0.2px currentColor;">41</div>
<div style="position:absolute;left:11.00px;top:1401.00px;width:42.00px;height:1.00px;background:#5a5a5a;"></div>
<div style="position:absolute;left:19.74px;top:1377.55px;font:normal 22.5px 'Liberation Sans',sans-serif;line-height:22.5px;color:#e6e6e6;white-space:nowrap;-webkit-text-stroke:0.2px currentColor;">42</div>
<div style="position:absolute;left:11.00px;top:1429.00px;width:42.00px;height:1.00px;background:#5a5a5a;"></div>
<div style="position:absolute;left:19.74px;top:1405.55px;font:normal 22.5px 'Liberation Sans',sans-serif;line-height:22.5px;color:#e6e6e6;white-space:nowrap;-webkit-text-stroke:0.2px currentColor;">43</div>
<div style="position:absolute;left:11.00px;top:1457.00px;width:42.00px;height:1.00px;background:#5a5a5a;"></div>
<div style="position:absolute;left:19.74px;top:1433.55px;font:normal 22.5px 'Liberation Sans',sans-serif;line-height:22.5px;color:#e6e6e6;white-space:nowrap;-webkit-text-stroke:0.2px currentColor;">44</div>
<div style="position:absolute;left:11.00px;top:1485.00px;width:42.00px;height:1.00px;background:#5a5a5a;"></div>
<div style="position:absolute;left:19.74px;top:1461.55px;font:normal 22.5px 'Liberation Sans',sans-serif;line-height:22.5px;color:#e6e6e6;white-space:nowrap;-webkit-text-stroke:0.2px currentColor;">45</div>
<div style="position:absolute;left:11.00px;top:1527.00px;width:42.00px;height:1.00px;background:#5a5a5a;"></div>
<div style="position:absolute;left:19.74px;top:1503.55px;font:normal 22.5px 'Liberation Sans',sans-serif;line-height:22.5px;color:#e6e6e6;white-space:nowrap;-webkit-text-stroke:0.2px currentColor;">46</div>
<div style="position:absolute;left:11.00px;top:1555.00px;width:42.00px;height:1.00px;background:#5a5a5a;"></div>
<div style="position:absolute;left:19.74px;top:1531.55px;font:normal 22.5px 'Liberation Sans',sans-serif;line-height:22.5px;color:#e6e6e6;white-space:nowrap;-webkit-text-stroke:0.2px currentColor;">47</div>
<div style="position:absolute;left:11.00px;top:1583.00px;width:42.00px;height:1.00px;background:#5a5a5a;"></div>
<div style="position:absolute;left:19.74px;top:1559.55px;font:normal 22.5px 'Liberation Sans',sans-serif;line-height:22.5px;color:#e6e6e6;white-space:nowrap;-webkit-text-stroke:0.2px currentColor;">48</div>
<div style="position:absolute;left:11.00px;top:1611.00px;width:42.00px;height:1.00px;background:#5a5a5a;"></div>
<div style="position:absolute;left:19.74px;top:1587.55px;font:normal 22.5px 'Liberation Sans',sans-serif;line-height:22.5px;color:#e6e6e6;white-space:nowrap;-webkit-text-stroke:0.2px currentColor;">49</div>
<div style="position:absolute;left:11.00px;top:1652.50px;width:42.00px;height:1.00px;background:#5a5a5a;"></div>
<div style="position:absolute;left:19.74px;top:1629.05px;font:normal 22.5px 'Liberation Sans',sans-serif;line-height:22.5px;color:#e6e6e6;white-space:nowrap;-webkit-text-stroke:0.2px currentColor;">50</div>
<div style="position:absolute;left:11.00px;top:460.00px;width:42.00px;height:1.00px;background:#5a5a5a;"></div>
<div style="position:absolute;left:11.00px;top:514.20px;width:42.00px;height:1.00px;background:#5a5a5a;"></div>
<div style="position:absolute;left:11.00px;top:516.00px;width:42.00px;height:1.00px;background:#5a5a5a;"></div>
<div style="position:absolute;left:52.00px;top:304.50px;width:36.00px;height:1.50px;background:#1f7a44;"></div>
<div style="position:absolute;left:52.00px;top:305.00px;width:1.60px;height:50.00px;background:#1f7a44;"></div>
<div style="position:absolute;left:1772.50px;top:305.00px;width:1.00px;height:1365.00px;background:#a8a8a8;"></div>
<div style="position:absolute;left:53.00px;top:514.00px;width:2807.00px;height:1.20px;background:#9a9a9a;"></div>
<div style="position:absolute;left:94.56px;top:311.95px;font:bold 38.7px 'Liberation Sans',sans-serif;line-height:38.7px;color:#262626;white-space:nowrap;transform:scaleX(1.0415);transform-origin:0 0;-webkit-text-stroke:0.8px currentColor;">Startup Costs (CAPEX)</div>
<div style="position:absolute;left:94.00px;top:358.60px;font:bold 35px 'Liberation Sans',sans-serif;line-height:35px;color:#000;white-space:nowrap;-webkit-text-stroke:0.8px currentColor;">ABC Company Inc.</div>
<div style="position:absolute;left:92.70px;top:400.25px;font:bold 20.5px 'Liberation Sans',sans-serif;line-height:20.5px;color:#2f7cef;white-space:nowrap;transform:scaleX(1.1168);transform-origin:0 0;-webkit-text-stroke:0.35px currentColor;">Go to Table of Contents</div>
<div style="position:absolute;left:92.70px;top:420.20px;width:257.30px;height:1.60px;background:#2f7cef;"></div>
<div style="position:absolute;left:92.04px;top:463.75px;font:bold 21.5px 'Liberation Sans',sans-serif;line-height:21.5px;color:#000;white-space:nowrap;transform:scaleX(1.0572);transform-origin:0 0;-webkit-text-stroke:0.35px currentColor;">Fiscal Year</div>
<div style="position:absolute;left:92.00px;top:491.45px;font:bold 21.5px 'Liberation Sans',sans-serif;line-height:21.5px;color:#000;white-space:nowrap;transform:scaleX(1.1021);transform-origin:0 0;-webkit-text-stroke:0.35px currentColor;">Month</div>
<div style="position:absolute;left:1713.90px;top:463.75px;font:bold 21.5px 'Liberation Sans',sans-serif;line-height:21.5px;color:#000;white-space:nowrap;transform:scaleX(1.1300);transform-origin:0 0;-webkit-text-stroke:0.35px currentColor;">2025</div>
<div style="position:absolute;left:1690.74px;top:491.45px;font:bold 21.5px 'Liberation Sans',sans-serif;line-height:21.5px;color:#000;white-space:nowrap;transform:scaleX(1.0950);transform-origin:0 0;-webkit-text-stroke:0.35px currentColor;">Dec-25</div>
<div style="position:absolute;left:1882.90px;top:463.75px;font:bold 21.5px 'Liberation Sans',sans-serif;line-height:21.5px;color:#000;white-space:nowrap;transform:scaleX(1.1300);transform-origin:0 0;-webkit-text-stroke:0.35px currentColor;">2026</div>
<div style="position:absolute;left:1862.36px;top:491.45px;font:bold 21.5px 'Liberation Sans',sans-serif;line-height:21.5px;color:#000;white-space:nowrap;transform:scaleX(1.0950);transform-origin:0 0;-webkit-text-stroke:0.35px currentColor;">Jan-26</div>
<div style="position:absolute;left:2051.90px;top:463.75px;font:bold 21.5px 'Liberation Sans',sans-serif;line-height:21.5px;color:#000;white-space:nowrap;transform:scaleX(1.1300);transform-origin:0 0;-webkit-text-stroke:0.35px currentColor;">2026</div>
<div style="position:absolute;left:2030.07px;top:491.45px;font:bold 21.5px 'Liberation Sans',sans-serif;line-height:21.5px;color:#000;white-space:nowrap;transform:scaleX(1.0950);transform-origin:0 0;-webkit-text-stroke:0.35px currentColor;">Feb-26</div>
<div style="position:absolute;left:2220.90px;top:463.75px;font:bold 21.5px 'Liberation Sans',sans-serif;line-height:21.5px;color:#000;white-space:nowrap;transform:scaleX(1.1300);transform-origin:0 0;-webkit-text-stroke:0.35px currentColor;">2026</div>
<div style="position:absolute;left:2199.06px;top:491.45px;font:bold 21.5px 'Liberation Sans',sans-serif;line-height:21.5px;color:#000;white-space:nowrap;transform:scaleX(1.0950);transform-origin:0 0;-webkit-text-stroke:0.35px currentColor;">Mar-26</div>
<div style="position:absolute;left:2389.90px;top:463.75px;font:bold 21.5px 'Liberation Sans',sans-serif;line-height:21.5px;color:#000;white-space:nowrap;transform:scaleX(1.1300);transform-origin:0 0;-webkit-text-stroke:0.35px currentColor;">2026</div>
<div style="position:absolute;left:2369.38px;top:491.45px;font:bold 21.5px 'Liberation Sans',sans-serif;line-height:21.5px;color:#000;white-space:nowrap;transform:scaleX(1.0950);transform-origin:0 0;-webkit-text-stroke:0.35px currentColor;">Apr-26</div>
<div style="position:absolute;left:2558.90px;top:463.75px;font:bold 21.5px 'Liberation Sans',sans-serif;line-height:21.5px;color:#000;white-space:nowrap;transform:scaleX(1.1300);transform-origin:0 0;-webkit-text-stroke:0.35px currentColor;">2026</div>
<div style="position:absolute;left:2533.13px;top:491.45px;font:bold 21.5px 'Liberation Sans',sans-serif;line-height:21.5px;color:#000;white-space:nowrap;transform:scaleX(1.0950);transform-origin:0 0;-webkit-text-stroke:0.35px currentColor;">May-26</div>
<div style="position:absolute;left:2727.90px;top:463.75px;font:bold 21.5px 'Liberation Sans',sans-serif;line-height:21.5px;color:#000;white-space:nowrap;transform:scaleX(1.1300);transform-origin:0 0;-webkit-text-stroke:0.35px currentColor;">2026</div>
<div style="position:absolute;left:2706.07px;top:491.45px;font:bold 21.5px 'Liberation Sans',sans-serif;line-height:21.5px;color:#000;white-space:nowrap;transform:scaleX(1.0950);transform-origin:0 0;-webkit-text-stroke:0.35px currentColor;">Jun-26</div>
<div style="position:absolute;left:94.15px;top:549.55px;font:bold 38.7px 'Liberation Sans',sans-serif;line-height:38.7px;color:#262626;white-space:nowrap;transform:scaleX(1.0520);transform-origin:0 0;-webkit-text-stroke:0.8px currentColor;">Startup Costs, $</div>
<div style="position:absolute;left:138.00px;top:617.00px;width:1635.00px;height:33.00px;background:#6c72e6;"></div>
<div style="position:absolute;left:945.60px;top:617.00px;width:2.80px;height:33.00px;background:#ffffff;"></div>
<div style="position:absolute;left:1151.60px;top:617.00px;width:2.80px;height:33.00px;background:#ffffff;"></div>
<div style="position:absolute;left:1357.60px;top:617.00px;width:2.80px;height:33.00px;background:#ffffff;"></div>
<div style="position:absolute;left:1564.60px;top:617.00px;width:2.80px;height:33.00px;background:#ffffff;"></div>
<div style="position:absolute;left:483.03px;top:624.25px;font:bold 21.5px 'Liberation Sans',sans-serif;line-height:21.5px;color:#fff;white-space:nowrap;transform:scaleX(1.0700);transform-origin:0 0;-webkit-text-stroke:0.35px currentColor;">Categories</div>
<div style="position:absolute;left:981.70px;top:624.25px;font:bold 21.5px 'Liberation Sans',sans-serif;line-height:21.5px;color:#fff;white-space:nowrap;transform:scaleX(1.0700);transform-origin:0 0;-webkit-text-stroke:0.35px currentColor;">Launch date</div>
<div style="position:absolute;left:1206.87px;top:624.25px;font:bold 21.5px 'Liberation Sans',sans-serif;line-height:21.5px;color:#fff;white-space:nowrap;transform:scaleX(1.0700);transform-origin:0 0;-webkit-text-stroke:0.35px currentColor;">End date</div>
<div style="position:absolute;left:1397.29px;top:624.25px;font:bold 21.5px 'Liberation Sans',sans-serif;line-height:21.5px;color:#fff;white-space:nowrap;transform:scaleX(1.0700);transform-origin:0 0;-webkit-text-stroke:0.35px currentColor;">Spending, $</div>
<div style="position:absolute;left:1597.25px;top:624.25px;font:bold 21.5px 'Liberation Sans',sans-serif;line-height:21.5px;color:#fff;white-space:nowrap;transform:scaleX(1.0700);transform-origin:0 0;-webkit-text-stroke:0.35px currentColor;">Amortizable?</div>
<div style="position:absolute;left:138.80px;top:651.30px;width:1633.00px;height:561.10px;background:#fff06a;"></div>
<div style="position:absolute;left:138.00px;top:649.60px;width:1635.00px;height:3.20px;background:#ffffff;"></div>
<div style="position:absolute;left:138.00px;top:679.27px;width:1635.00px;height:1.80px;background:#fffbe2;"></div>
<div style="position:absolute;left:138.00px;top:707.34px;width:1635.00px;height:1.80px;background:#fffbe2;"></div>
<div style="position:absolute;left:138.00px;top:735.41px;width:1635.00px;height:1.80px;background:#fffbe2;"></div>
<div style="position:absolute;left:138.00px;top:763.48px;width:1635.00px;height:1.80px;background:#fffbe2;"></div>
<div style="position:absolute;left:138.00px;top:791.55px;width:1635.00px;height:1.80px;background:#fffbe2;"></div>
<div style="position:absolute;left:138.00px;top:819.62px;width:1635.00px;height:1.80px;background:#fffbe2;"></div>
<div style="position:absolute;left:138.00px;top:847.69px;width:1635.00px;height:1.80px;background:#fffbe2;"></div>
<div style="position:absolute;left:138.00px;top:875.76px;width:1635.00px;height:1.80px;background:#fffbe2;"></div>
<div style="position:absolute;left:138.00px;top:903.83px;width:1635.00px;height:1.80px;background:#fffbe2;"></div>
<div style="position:absolute;left:138.00px;top:931.90px;width:1635.00px;height:1.80px;background:#fffbe2;"></div>
<div style="position:absolute;left:138.00px;top:959.97px;width:1635.00px;height:1.80px;background:#fffbe2;"></div>
<div style="position:absolute;left:138.00px;top:988.04px;width:1635.00px;height:1.80px;background:#fffbe2;"></div>
<div style="position:absolute;left:138.00px;top:1016.11px;width:1635.00px;height:1.80px;background:#fffbe2;"></div>
<div style="position:absolute;left:138.00px;top:1044.18px;width:1635.00px;height:1.80px;background:#fffbe2;"></div>
<div style="position:absolute;left:138.00px;top:1072.25px;width:1635.00px;height:1.80px;background:#fffbe2;"></div>
<div style="position:absolute;left:138.00px;top:1100.32px;width:1635.00px;height:1.80px;background:#fffbe2;"></div>
<div style="position:absolute;left:138.00px;top:1128.39px;width:1635.00px;height:1.80px;background:#fffbe2;"></div>
<div style="position:absolute;left:138.00px;top:1156.46px;width:1635.00px;height:1.80px;background:#fffbe2;"></div>
<div style="position:absolute;left:138.00px;top:1184.53px;width:1635.00px;height:1.80px;background:#fffbe2;"></div>
<div style="position:absolute;left:945.60px;top:649.60px;width:2.80px;height:563.10px;background:#fffef6;"></div>
<div style="position:absolute;left:1151.60px;top:649.60px;width:2.80px;height:563.10px;background:#fffef6;"></div>
<div style="position:absolute;left:1357.60px;top:649.60px;width:2.80px;height:563.10px;background:#fffef6;"></div>
<div style="position:absolute;left:1564.60px;top:649.60px;width:2.80px;height:563.10px;background:#fffef6;"></div>
<div style="position:absolute;left:140.59px;top:657.22px;font:normal 21.5px 'Liberation Sans',sans-serif;line-height:21.5px;color:#111;white-space:nowrap;transform:scaleX(1.0150);transform-origin:0 0;-webkit-text-stroke:0.2px currentColor;">Office Setup &amp; Furnishings</div>
<div style="position:absolute;left:1017.60px;top:657.22px;font:normal 21.5px 'Liberation Sans',sans-serif;line-height:21.5px;color:#111;white-space:nowrap;transform:scaleX(0.9850);transform-origin:0 0;-webkit-text-stroke:0.2px currentColor;">Jan-26</div>
<div style="position:absolute;left:1221.95px;top:657.22px;font:normal 21.5px 'Liberation Sans',sans-serif;line-height:21.5px;color:#111;white-space:nowrap;transform:scaleX(0.9850);transform-origin:0 0;-webkit-text-stroke:0.2px currentColor;">Mar-26</div>
<div style="position:absolute;left:1489.18px;top:657.22px;font:normal 21.5px 'Liberation Sans',sans-serif;line-height:21.5px;color:#111;white-space:nowrap;transform:scaleX(0.9850);transform-origin:0 0;-webkit-text-stroke:0.2px currentColor;">45,000</div>
<div style="position:absolute;left:1652.08px;top:657.22px;font:normal 21.5px 'Liberation Sans',sans-serif;line-height:21.5px;color:#111;white-space:nowrap;transform:scaleX(1.0150);transform-origin:0 0;-webkit-text-stroke:0.2px currentColor;">Yes</div>
<div style="position:absolute;left:1865.58px;top:657.22px;font:normal 21.5px 'Liberation Sans',sans-serif;line-height:21.5px;color:#111;white-space:nowrap;transform:scaleX(0.9850);transform-origin:0 0;-webkit-text-stroke:0.2px currentColor;">15,000</div>
<div style="position:absolute;left:2034.58px;top:657.22px;font:normal 21.5px 'Liberation Sans',sans-serif;line-height:21.5px;color:#111;white-space:nowrap;transform:scaleX(0.9850);transform-origin:0 0;-webkit-text-stroke:0.2px currentColor;">15,000</div>
<div style="position:absolute;left:2203.58px;top:657.22px;font:normal 21.5px 'Liberation Sans',sans-serif;line-height:21.5px;color:#111;white-space:nowrap;transform:scaleX(0.9850);transform-origin:0 0;-webkit-text-stroke:0.2px currentColor;">15,000</div>
<div style="position:absolute;left:2404.90px;top:657.22px;font:normal 21.5px 'Liberation Sans',sans-serif;line-height:21.5px;color:#111;white-space:nowrap;transform:scaleX(1.2000);transform-origin:0 0;-webkit-text-stroke:0.2px currentColor;">-</div>
<div style="position:absolute;left:2573.90px;top:657.22px;font:normal 21.5px 'Liberation Sans',sans-serif;line-height:21.5px;color:#111;white-space:nowrap;transform:scaleX(1.2000);transform-origin:0 0;-webkit-text-stroke:0.2px currentColor;">-</div>
<div style="position:absolute;left:2742.90px;top:657.22px;font:normal 21.5px 'Liberation Sans',sans-serif;line-height:21.5px;color:#111;white-space:nowrap;transform:scaleX(1.2000);transform-origin:0 0;-webkit-text-stroke:0.2px currentColor;">-</div>
<div style="position:absolute;left:140.59px;top:685.29px;font:normal 21.5px 'Liberation Sans',sans-serif;line-height:21.5px;color:#111;white-space:nowrap;transform:scaleX(1.0150);transform-origin:0 0;-webkit-text-stroke:0.2px currentColor;">Initial IT Hardware (Workstations, Servers)</div>
<div style="position:absolute;left:1015.94px;top:685.29px;font:normal 21.5px 'Liberation Sans',sans-serif;line-height:21.5px;color:#111;white-space:nowrap;transform:scaleX(0.9850);transform-origin:0 0;-webkit-text-stroke:0.2px currentColor;">Feb-26</div>
<div style="position:absolute;left:1224.20px;top:685.29px;font:normal 21.5px 'Liberation Sans',sans-serif;line-height:21.5px;color:#111;white-space:nowrap;transform:scaleX(0.9850);transform-origin:0 0;-webkit-text-stroke:0.2px currentColor;">Apr-26</div>
<div style="position:absolute;left:1489.18px;top:685.29px;font:normal 21.5px 'Liberation Sans',sans-serif;line-height:21.5px;color:#111;white-space:nowrap;transform:scaleX(0.9850);transform-origin:0 0;-webkit-text-stroke:0.2px currentColor;">30,000</div>
<div style="position:absolute;left:1652.08px;top:685.29px;font:normal 21.5px 'Liberation Sans',sans-serif;line-height:21.5px;color:#111;white-space:nowrap;transform:scaleX(1.0150);transform-origin:0 0;-webkit-text-stroke:0.2px currentColor;">Yes</div>
<div style="position:absolute;left:1897.90px;top:685.29px;font:normal 21.5px 'Liberation Sans',sans-serif;line-height:21.5px;color:#111;white-space:nowrap;transform:scaleX(1.2000);transform-origin:0 0;-webkit-text-stroke:0.2px currentColor;">-</div>
<div style="position:absolute;left:2034.58px;top:685.29px;font:normal 21.5px 'Liberation Sans',sans-serif;line-height:21.5px;color:#111;white-space:nowrap;transform:scaleX(0.9850);transform-origin:0 0;-webkit-text-stroke:0.2px currentColor;">10,000</div>
<div style="position:absolute;left:2203.58px;top:685.29px;font:normal 21.5px 'Liberation Sans',sans-serif;line-height:21.5px;color:#111;white-space:nowrap;transform:scaleX(0.9850);transform-origin:0 0;-webkit-text-stroke:0.2px currentColor;">10,000</div>
<div style="position:absolute;left:2372.58px;top:685.29px;font:normal 21.5px 'Liberation Sans',sans-serif;line-height:21.5px;color:#111;white-space:nowrap;transform:scaleX(0.9850);transform-origin:0 0;-webkit-text-stroke:0.2px currentColor;">10,000</div>
<div style="position:absolute;left:2573.90px;top:685.29px;font:normal 21.5px 'Liberation Sans',sans-serif;line-height:21.5px;color:#111;white-space:nowrap;transform:scaleX(1.2000);transform-origin:0 0;-webkit-text-stroke:0.2px currentColor;">-</div>
<div style="position:absolute;left:2742.90px;top:685.29px;font:normal 21.5px 'Liberation Sans',sans-serif;line-height:21.5px;color:#111;white-space:nowrap;transform:scaleX(1.2000);transform-origin:0 0;-webkit-text-stroke:0.2px currentColor;">-</div>
<div style="position:absolute;left:140.59px;top:713.36px;font:normal 21.5px 'Liberation Sans',sans-serif;line-height:21.5px;color:#111;white-space:nowrap;transform:scaleX(1.0150);transform-origin:0 0;-webkit-text-stroke:0.2px currentColor;">Core Analytics Platform License (Perpetual)</div>
<div style="position:absolute;left:1015.95px;top:713.36px;font:normal 21.5px 'Liberation Sans',sans-serif;line-height:21.5px;color:#111;white-space:nowrap;transform:scaleX(0.9850);transform-origin:0 0;-webkit-text-stroke:0.2px currentColor;">Mar-26</div>
<div style="position:absolute;left:1221.95px;top:713.36px;font:normal 21.5px 'Liberation Sans',sans-serif;line-height:21.5px;color:#111;white-space:nowrap;transform:scaleX(0.9850);transform-origin:0 0;-webkit-text-stroke:0.2px currentColor;">Mar-26</div>
<div style="position:absolute;left:1489.18px;top:713.36px;font:normal 21.5px 'Liberation Sans',sans-serif;line-height:21.5px;color:#111;white-space:nowrap;transform:scaleX(0.9850);transform-origin:0 0;-webkit-text-stroke:0.2px currentColor;">25,000</div>
<div style="position:absolute;left:1652.08px;top:713.36px;font:normal 21.5px 'Liberation Sans',sans-serif;line-height:21.5px;color:#111;white-space:nowrap;transform:scaleX(1.0150);transform-origin:0 0;-webkit-text-stroke:0.2px currentColor;">Yes</div>
<div style="position:absolute;left:1897.90px;top:713.36px;font:normal 21.5px 'Liberation Sans',sans-serif;line-height:21.5px;color:#111;white-space:nowrap;transform:scaleX(1.2000);transform-origin:0 0;-webkit-text-stroke:0.2px currentColor;">-</div>
<div style="position:absolute;left:2066.90px;top:713.36px;font:normal 21.5px 'Liberation Sans',sans-serif;line-height:21.5px;color:#111;white-space:nowrap;transform:scaleX(1.2000);transform-origin:0 0;-webkit-text-stroke:0.2px currentColor;">-</div>
<div style="position:absolute;left:2203.58px;top:713.36px;font:normal 21.5px 'Liberation Sans',sans-serif;line-height:21.5px;color:#111;white-space:nowrap;transform:scaleX(0.9850);transform-origin:0 0;-webkit-text-stroke:0.2px currentColor;">25,000</div>
<div style="position:absolute;left:2404.90px;top:713.36px;font:normal 21.5px 'Liberation Sans',sans-serif;line-height:21.5px;color:#111;white-space:nowrap;transform:scaleX(1.2000);transform-origin:0 0;-webkit-text-stroke:0.2px currentColor;">-</div>
<div style="position:absolute;left:2573.90px;top:713.36px;font:normal 21.5px 'Liberation Sans',sans-serif;line-height:21.5px;color:#111;white-space:nowrap;transform:scaleX(1.2000);transform-origin:0 0;-webkit-text-stroke:0.2px currentColor;">-</div>
<div style="position:absolute;left:2742.90px;top:713.36px;font:normal 21.5px 'Liberation Sans',sans-serif;line-height:21.5px;color:#111;white-space:nowrap;transform:scaleX(1.2000);transform-origin:0 0;-webkit-text-stroke:0.2px currentColor;">-</div>
<div style="position:absolute;left:141.60px;top:741.43px;font:normal 21.5px 'Liberation Sans',sans-serif;line-height:21.5px;color:#111;white-space:nowrap;transform:scaleX(1.0150);transform-origin:0 0;-webkit-text-stroke:0.2px currentColor;">Website Development &amp; Branding</div>
<div style="position:absolute;left:1017.60px;top:741.43px;font:normal 21.5px 'Liberation Sans',sans-serif;line-height:21.5px;color:#111;white-space:nowrap;transform:scaleX(0.9850);transform-origin:0 0;-webkit-text-stroke:0.2px currentColor;">Jan-26</div>
<div style="position:absolute;left:1223.60px;top:741.43px;font:normal 21.5px 'Liberation Sans',sans-serif;line-height:21.5px;color:#111;white-space:nowrap;transform:scaleX(0.9850);transform-origin:0 0;-webkit-text-stroke:0.2px currentColor;">Jun-26</div>
<div style="position:absolute;left:1489.18px;top:741.43px;font:normal 21.5px 'Liberation Sans',sans-serif;line-height:21.5px;color:#111;white-space:nowrap;transform:scaleX(0.9850);transform-origin:0 0;-webkit-text-stroke:0.2px currentColor;">15,000</div>
<div style="position:absolute;left:1652.08px;top:741.43px;font:normal 21.5px 'Liberation Sans',sans-serif;line-height:21.5px;color:#111;white-space:nowrap;transform:scaleX(1.0150);transform-origin:0 0;-webkit-text-stroke:0.2px currentColor;">Yes</div>
<div style="position:absolute;left:1877.36px;top:741.43px;font:normal 21.5px 'Liberation Sans',sans-serif;line-height:21.5px;color:#111;white-space:nowrap;transform:scaleX(0.9850);transform-origin:0 0;-webkit-text-stroke:0.2px currentColor;">2,500</div>
<div style="position:absolute;left:2046.36px;top:741.43px;font:normal 21.5px 'Liberation Sans',sans-serif;line-height:21.5px;color:#111;white-space:nowrap;transform:scaleX(0.9850);transform-origin:0 0;-webkit-text-stroke:0.2px currentColor;">2,500</div>
<div style="position:absolute;left:2215.36px;top:741.43px;font:normal 21.5px 'Liberation Sans',sans-serif;line-height:21.5px;color:#111;white-space:nowrap;transform:scaleX(0.9850);transform-origin:0 0;-webkit-text-stroke:0.2px currentColor;">2,500</div>
<div style="position:absolute;left:2384.36px;top:741.43px;font:normal 21.5px 'Liberation Sans',sans-serif;line-height:21.5px;color:#111;white-space:nowrap;transform:scaleX(0.9850);transform-origin:0 0;-webkit-text-stroke:0.2px currentColor;">2,500</div>
<div style="position:absolute;left:2553.36px;top:741.43px;font:normal 21.5px 'Liberation Sans',sans-serif;line-height:21.5px;color:#111;white-space:nowrap;transform:scaleX(0.9850);transform-origin:0 0;-webkit-text-stroke:0.2px currentColor;">2,500</div>
<div style="position:absolute;left:2722.36px;top:741.43px;font:normal 21.5px 'Liberation Sans',sans-serif;line-height:21.5px;color:#111;white-space:nowrap;transform:scaleX(0.9850);transform-origin:0 0;-webkit-text-stroke:0.2px currentColor;">2,500</div>
<div style="position:absolute;left:141.60px;top:769.50px;font:normal 21.5px 'Liberation Sans',sans-serif;line-height:21.5px;color:#111;white-space:nowrap;transform:scaleX(1.0150);transform-origin:0 0;-webkit-text-stroke:0.2px currentColor;">Security System Installation</div>
<div style="position:absolute;left:1018.20px;top:769.50px;font:normal 21.5px 'Liberation Sans',sans-serif;line-height:21.5px;color:#111;white-space:nowrap;transform:scaleX(0.9850);transform-origin:0 0;-webkit-text-stroke:0.2px currentColor;">Apr-26</div>
<div style="position:absolute;left:1220.18px;top:769.50px;font:normal 21.5px 'Liberation Sans',sans-serif;line-height:21.5px;color:#111;white-space:nowrap;transform:scaleX(0.9850);transform-origin:0 0;-webkit-text-stroke:0.2px currentColor;">May-26</div>
<div style="position:absolute;left:1500.96px;top:769.50px;font:normal 21.5px 'Liberation Sans',sans-serif;line-height:21.5px;color:#111;white-space:nowrap;transform:scaleX(0.9850);transform-origin:0 0;-webkit-text-stroke:0.2px currentColor;">8,000</div>
<div style="position:absolute;left:1652.08px;top:769.50px;font:normal 21.5px 'Liberation Sans',sans-serif;line-height:21.5px;color:#111;white-space:nowrap;transform:scaleX(1.0150);transform-origin:0 0;-webkit-text-stroke:0.2px currentColor;">Yes</div>
<div style="position:absolute;left:1897.90px;top:769.50px;font:normal 21.5px 'Liberation Sans',sans-serif;line-height:21.5px;color:#111;white-space:nowrap;transform:scaleX(1.2000);transform-origin:0 0;-webkit-text-stroke:0.2px currentColor;">-</div>
<div style="position:absolute;left:2066.90px;top:769.50px;font:normal 21.5px 'Liberation Sans',sans-serif;line-height:21.5px;color:#111;white-space:nowrap;transform:scaleX(1.2000);transform-origin:0 0;-webkit-text-stroke:0.2px currentColor;">-</div>
<div style="position:absolute;left:2235.90px;top:769.50px;font:normal 21.5px 'Liberation Sans',sans-serif;line-height:21.5px;color:#111;white-space:nowrap;transform:scaleX(1.2000);transform-origin:0 0;-webkit-text-stroke:0.2px currentColor;">-</div>
<div style="position:absolute;left:2384.36px;top:769.50px;font:normal 21.5px 'Liberation Sans',sans-serif;line-height:21.5px;color:#111;white-space:nowrap;transform:scaleX(0.9850);transform-origin:0 0;-webkit-text-stroke:0.2px currentColor;">4,000</div>
<div style="position:absolute;left:2553.36px;top:769.50px;font:normal 21.5px 'Liberation Sans',sans-serif;line-height:21.5px;color:#111;white-space:nowrap;transform:scaleX(0.9850);transform-origin:0 0;-webkit-text-stroke:0.2px currentColor;">4,000</div>
<div style="position:absolute;left:2742.90px;top:769.50px;font:normal 21.5px 'Liberation Sans',sans-serif;line-height:21.5px;color:#111;white-space:nowrap;transform:scaleX(1.2000);transform-origin:0 0;-webkit-text-stroke:0.2px currentColor;">-</div>
<div style="position:absolute;left:141.60px;top:797.57px;font:normal 21.5px 'Liberation Sans',sans-serif;line-height:21.5px;color:#111;white-space:nowrap;transform:scaleX(1.0150);transform-origin:0 0;-webkit-text-stroke:0.2px currentColor;">Telehealth Demo Environment Setup</div>
<div style="position:absolute;left:1021.14px;top:797.57px;font:normal 21.5px 'Liberation Sans',sans-serif;line-height:21.5px;color:#111;white-space:nowrap;transform:scaleX(0.9850);transform-origin:0 0;-webkit-text-stroke:0.2px currentColor;">Jul-26</div>
<div style="position:absolute;left:1221.83px;top:797.57px;font:normal 21.5px 'Liberation Sans',sans-serif;line-height:21.5px;color:#111;white-space:nowrap;transform:scaleX(0.9850);transform-origin:0 0;-webkit-text-stroke:0.2px currentColor;">Sep-26</div>
<div style="position:absolute;left:1489.18px;top:797.57px;font:normal 21.5px 'Liberation Sans',sans-serif;line-height:21.5px;color:#111;white-space:nowrap;transform:scaleX(0.9850);transform-origin:0 0;-webkit-text-stroke:0.2px currentColor;">12,000</div>
<div style="position:absolute;left:1652.08px;top:797.57px;font:normal 21.5px 'Liberation Sans',sans-serif;line-height:21.5px;color:#111;white-space:nowrap;transform:scaleX(1.0150);transform-origin:0 0;-webkit-text-stroke:0.2px currentColor;">Yes</div>
<div style="position:absolute;left:1897.90px;top:797.57px;font:normal 21.5px 'Liberation Sans',sans-serif;line-height:21.5px;color:#111;white-space:nowrap;transform:scaleX(1.2000);transform-origin:0 0;-webkit-text-stroke:0.2px currentColor;">-</div>
<div style="position:absolute;left:2066.90px;top:797.57px;font:normal 21.5px 'Liberation Sans',sans-serif;line-height:21.5px;color:#111;white-space:nowrap;transform:scaleX(1.2000);transform-origin:0 0;-webkit-text-stroke:0.2px currentColor;">-</div>
<div style="position:absolute;left:2235.90px;top:797.57px;font:normal 21.5px 'Liberation Sans',sans-serif;line-height:21.5px;color:#111;white-space:nowrap;transform:scaleX(1.2000);transform-origin:0 0;-webkit-text-stroke:0.2px currentColor;">-</div>
<div style="position:absolute;left:2404.90px;top:797.57px;font:normal 21.5px 'Liberation Sans',sans-serif;line-height:21.5px;color:#111;white-space:nowrap;transform:scaleX(1.2000);transform-origin:0 0;-webkit-text-stroke:0.2px currentColor;">-</div>
<div style="position:absolute;left:2573.90px;top:797.57px;font:normal 21.5px 'Liberation Sans',sans-serif;line-height:21.5px;color:#111;white-space:nowrap;transform:scaleX(1.2000);transform-origin:0 0;-webkit-text-stroke:0.2px currentColor;">-</div>
<div style="position:absolute;left:2742.90px;top:797.57px;font:normal 21.5px 'Liberation Sans',sans-serif;line-height:21.5px;color:#111;white-space:nowrap;transform:scaleX(1.2000);transform-origin:0 0;-webkit-text-stroke:0.2px currentColor;">-</div>
<div style="position:absolute;left:140.59px;top:825.64px;font:normal 21.5px 'Liberation Sans',sans-serif;line-height:21.5px;color:#111;white-space:nowrap;transform:scaleX(1.0150);transform-origin:0 0;-webkit-text-stroke:0.2px currentColor;">Legal Entity &amp; Initial Compliance Setup</div>
<div style="position:absolute;left:1017.60px;top:825.64px;font:normal 21.5px 'Liberation Sans',sans-serif;line-height:21.5px;color:#111;white-space:nowrap;transform:scaleX(0.9850);transform-origin:0 0;-webkit-text-stroke:0.2px currentColor;">Jan-26</div>
<div style="position:absolute;left:1221.94px;top:825.64px;font:normal 21.5px 'Liberation Sans',sans-serif;line-height:21.5px;color:#111;white-space:nowrap;transform:scaleX(0.9850);transform-origin:0 0;-webkit-text-stroke:0.2px currentColor;">Feb-26</div>
<div style="position:absolute;left:1489.18px;top:825.64px;font:normal 21.5px 'Liberation Sans',sans-serif;line-height:21.5px;color:#111;white-space:nowrap;transform:scaleX(0.9850);transform-origin:0 0;-webkit-text-stroke:0.2px currentColor;">10,000</div>
<div style="position:absolute;left:1652.08px;top:825.64px;font:normal 21.5px 'Liberation Sans',sans-serif;line-height:21.5px;color:#111;white-space:nowrap;transform:scaleX(1.0150);transform-origin:0 0;-webkit-text-stroke:0.2px currentColor;">Yes</div>
<div style="position:absolute;left:1877.36px;top:825.64px;font:normal 21.5px 'Liberation Sans',sans-serif;line-height:21.5px;color:#111;white-space:nowrap;transform:scaleX(0.9850);transform-origin:0 0;-webkit-text-stroke:0.2px currentColor;">5,000</div>
<div style="position:absolute;left:2046.36px;top:825.64px;font:normal 21.5px 'Liberation Sans',sans-serif;line-height:21.5px;color:#111;white-space:nowrap;transform:scaleX(0.9850);transform-origin:0 0;-webkit-text-stroke:0.2px currentColor;">5,000</div>
<div style="position:absolute;left:2235.90px;top:825.64px;font:normal 21.5px 'Liberation Sans',sans-serif;line-height:21.5px;color:#111;white-space:nowrap;transform:scaleX(1.2000);transform-origin:0 0;-webkit-text-stroke:0.2px currentColor;">-</div>
<div style="position:absolute;left:2404.90px;top:825.64px;font:normal 21.5px 'Liberation Sans',sans-serif;line-height:21.5px;color:#111;white-space:nowrap;transform:scaleX(1.2000);transform-origin:0 0;-webkit-text-stroke:0.2px currentColor;">-</div>
<div style="position:absolute;left:2573.90px;top:825.64px;font:normal 21.5px 'Liberation Sans',sans-serif;line-height:21.5px;color:#111;white-space:nowrap;transform:scaleX(1.2000);transform-origin:0 0;-webkit-text-stroke:0.2px currentColor;">-</div>
<div style="position:absolute;left:2742.90px;top:825.64px;font:normal 21.5px 'Liberation Sans',sans-serif;line-height:21.5px;color:#111;white-space:nowrap;transform:scaleX(1.2000);transform-origin:0 0;-webkit-text-stroke:0.2px currentColor;">-</div>
<div style="position:absolute;left:140.59px;top:853.71px;font:normal 21.5px 'Liberation Sans',sans-serif;line-height:21.5px;color:#111;white-space:nowrap;transform:scaleX(1.0150);transform-origin:0 0;-webkit-text-stroke:0.2px currentColor;">Backup &amp; Disaster Recovery System</div>
<div style="position:absolute;left:1015.83px;top:853.71px;font:normal 21.5px 'Liberation Sans',sans-serif;line-height:21.5px;color:#111;white-space:nowrap;transform:scaleX(0.9850);transform-origin:0 0;-webkit-text-stroke:0.2px currentColor;">Aug-26</div>
<div style="position:absolute;left:1223.71px;top:853.71px;font:normal 21.5px 'Liberation Sans',sans-serif;line-height:21.5px;color:#111;white-space:nowrap;transform:scaleX(0.9850);transform-origin:0 0;-webkit-text-stroke:0.2px currentColor;">Oct-26</div>
<div style="position:absolute;left:1500.96px;top:853.71px;font:normal 21.5px 'Liberation Sans',sans-serif;line-height:21.5px;color:#111;white-space:nowrap;transform:scaleX(0.9850);transform-origin:0 0;-webkit-text-stroke:0.2px currentColor;">7,000</div>
<div style="position:absolute;left:1652.08px;top:853.71px;font:normal 21.5px 'Liberation Sans',sans-serif;line-height:21.5px;color:#111;white-space:nowrap;transform:scaleX(1.0150);transform-origin:0 0;-webkit-text-stroke:0.2px currentColor;">Yes</div>
<div style="position:absolute;left:1897.90px;top:853.71px;font:normal 21.5px 'Liberation Sans',sans-serif;line-height:21.5px;color:#111;white-space:nowrap;transform:scaleX(1.2000);transform-origin:0 0;-webkit-text-stroke:0.2px currentColor;">-</div>
<div style="position:absolute;left:2066.90px;top:853.71px;font:normal 21.5px 'Liberation Sans',sans-serif;line-height:21.5px;color:#111;white-space:nowrap;transform:scaleX(1.2000);transform-origin:0 0;-webkit-text-stroke:0.2px currentColor;">-</div>
<div style="position:absolute;left:2235.90px;top:853.71px;font:normal 21.5px 'Liberation Sans',sans-serif;line-height:21.5px;color:#111;white-space:nowrap;transform:scaleX(1.2000);transform-origin:0 0;-webkit-text-stroke:0.2px currentColor;">-</div>
<div style="position:absolute;left:2404.90px;top:853.71px;font:normal 21.5px 'Liberation Sans',sans-serif;line-height:21.5px;color:#111;white-space:nowrap;transform:scaleX(1.2000);transform-origin:0 0;-webkit-text-stroke:0.2px currentColor;">-</div>
<div style="position:absolute;left:2573.90px;top:853.71px;font:normal 21.5px 'Liberation Sans',sans-serif;line-height:21.5px;color:#111;white-space:nowrap;transform:scaleX(1.2000);transform-origin:0 0;-webkit-text-stroke:0.2px currentColor;">-</div>
<div style="position:absolute;left:2742.90px;top:853.71px;font:normal 21.5px 'Liberation Sans',sans-serif;line-height:21.5px;color:#111;white-space:nowrap;transform:scaleX(1.2000);transform-origin:0 0;-webkit-text-stroke:0.2px currentColor;">-</div>
<div style="position:absolute;left:141.60px;top:881.78px;font:normal 21.5px 'Liberation Sans',sans-serif;line-height:21.5px;color:#111;white-space:nowrap;transform:scaleX(1.0150);transform-origin:0 0;-webkit-text-stroke:0.2px currentColor;">-</div>
<div style="position:absolute;left:1652.08px;top:881.78px;font:normal 21.5px 'Liberation Sans',sans-serif;line-height:21.5px;color:#111;white-space:nowrap;transform:scaleX(1.0150);transform-origin:0 0;-webkit-text-stroke:0.2px currentColor;">Yes</div>
<div style="position:absolute;left:1897.90px;top:881.78px;font:normal 21.5px 'Liberation Sans',sans-serif;line-height:21.5px;color:#111;white-space:nowrap;transform:scaleX(1.2000);transform-origin:0 0;-webkit-text-stroke:0.2px currentColor;">-</div>
<div style="position:absolute;left:2066.90px;top:881.78px;font:normal 21.5px 'Liberation Sans',sans-serif;line-height:21.5px;color:#111;white-space:nowrap;transform:scaleX(1.2000);transform-origin:0 0;-webkit-text-stroke:0.2px currentColor;">-</div>
<div style="position:absolute;left:2235.90px;top:881.78px;font:normal 21.5px 'Liberation Sans',sans-serif;line-height:21.5px;color:#111;white-space:nowrap;transform:scaleX(1.2000);transform-origin:0 0;-webkit-text-stroke:0.2px currentColor;">-</div>
<div style="position:absolute;left:2404.90px;top:881.78px;font:normal 21.5px 'Liberation Sans',sans-serif;line-height:21.5px;color:#111;white-space:nowrap;transform:scaleX(1.2000);transform-origin:0 0;-webkit-text-stroke:0.2px currentColor;">-</div>
<div style="position:absolute;left:2573.90px;top:881.78px;font:normal 21.5px 'Liberation Sans',sans-serif;line-height:21.5px;color:#111;white-space:nowrap;transform:scaleX(1.2000);transform-origin:0 0;-webkit-text-stroke:0.2px currentColor;">-</div>
<div style="position:absolute;left:2742.90px;top:881.78px;font:normal 21.5px 'Liberation Sans',sans-serif;line-height:21.5px;color:#111;white-space:nowrap;transform:scaleX(1.2000);transform-origin:0 0;-webkit-text-stroke:0.2px currentColor;">-</div>
<div style="position:absolute;left:141.60px;top:909.85px;font:normal 21.5px 'Liberation Sans',sans-serif;line-height:21.5px;color:#111;white-space:nowrap;transform:scaleX(1.0150);transform-origin:0 0;-webkit-text-stroke:0.2px currentColor;">-</div>
<div style="position:absolute;left:1652.08px;top:909.85px;font:normal 21.5px 'Liberation Sans',sans-serif;line-height:21.5px;color:#111;white-space:nowrap;transform:scaleX(1.0150);transform-origin:0 0;-webkit-text-stroke:0.2px currentColor;">Yes</div>
<div style="position:absolute;left:1897.90px;top:909.85px;font:normal 21.5px 'Liberation Sans',sans-serif;line-height:21.5px;color:#111;white-space:nowrap;transform:scaleX(1.2000);transform-origin:0 0;-webkit-text-stroke:0.2px currentColor;">-</div>
<div style="position:absolute;left:2066.90px;top:909.85px;font:normal 21.5px 'Liberation Sans',sans-serif;line-height:21.5px;color:#111;white-space:nowrap;transform:scaleX(1.2000);transform-origin:0 0;-webkit-text-stroke:0.2px currentColor;">-</div>
<div style="position:absolute;left:2235.90px;top:909.85px;font:normal 21.5px 'Liberation Sans',sans-serif;line-height:21.5px;color:#111;white-space:nowrap;transform:scaleX(1.2000);transform-origin:0 0;-webkit-text-stroke:0.2px currentColor;">-</div>
<div style="position:absolute;left:2404.90px;top:909.85px;font:normal 21.5px 'Liberation Sans',sans-serif;line-height:21.5px;color:#111;white-space:nowrap;transform:scaleX(1.2000);transform-origin:0 0;-webkit-text-stroke:0.2px currentColor;">-</div>
<div style="position:absolute;left:2573.90px;top:909.85px;font:normal 21.5px 'Liberation Sans',sans-serif;line-height:21.5px;color:#111;white-space:nowrap;transform:scaleX(1.2000);transform-origin:0 0;-webkit-text-stroke:0.2px currentColor;">-</div>
<div style="position:absolute;left:2742.90px;top:909.85px;font:normal 21.5px 'Liberation Sans',sans-serif;line-height:21.5px;color:#111;white-space:nowrap;transform:scaleX(1.2000);transform-origin:0 0;-webkit-text-stroke:0.2px currentColor;">-</div>
<div style="position:absolute;left:141.60px;top:937.92px;font:normal 21.5px 'Liberation Sans',sans-serif;line-height:21.5px;color:#111;white-space:nowrap;transform:scaleX(1.0150);transform-origin:0 0;-webkit-text-stroke:0.2px currentColor;">-</div>
<div style="position:absolute;left:1652.08px;top:937.92px;font:normal 21.5px 'Liberation Sans',sans-serif;line-height:21.5px;color:#111;white-space:nowrap;transform:scaleX(1.0150);transform-origin:0 0;-webkit-text-stroke:0.2px currentColor;">Yes</div>
<div style="position:absolute;left:1897.90px;top:937.92px;font:normal 21.5px 'Liberation Sans',sans-serif;line-height:21.5px;color:#111;white-space:nowrap;transform:scaleX(1.2000);transform-origin:0 0;-webkit-text-stroke:0.2px currentColor;">-</div>
<div style="position:absolute;left:2066.90px;top:937.92px;font:normal 21.5px 'Liberation Sans',sans-serif;line-height:21.5px;color:#111;white-space:nowrap;transform:scaleX(1.2000);transform-origin:0 0;-webkit-text-stroke:0.2px currentColor;">-</div>
<div style="position:absolute;left:2235.90px;top:937.92px;font:normal 21.5px 'Liberation Sans',sans-serif;line-height:21.5px;color:#111;white-space:nowrap;transform:scaleX(1.2000);transform-origin:0 0;-webkit-text-stroke:0.2px currentColor;">-</div>
<div style="position:absolute;left:2404.90px;top:937.92px;font:normal 21.5px 'Liberation Sans',sans-serif;line-height:21.5px;color:#111;white-space:nowrap;transform:scaleX(1.2000);transform-origin:0 0;-webkit-text-stroke:0.2px currentColor;">-</div>
<div style="position:absolute;left:2573.90px;top:937.92px;font:normal 21.5px 'Liberation Sans',sans-serif;line-height:21.5px;color:#111;white-space:nowrap;transform:scaleX(1.2000);transform-origin:0 0;-webkit-text-stroke:0.2px currentColor;">-</div>
<div style="position:absolute;left:2742.90px;top:937.92px;font:normal 21.5px 'Liberation Sans',sans-serif;line-height:21.5px;color:#111;white-space:nowrap;transform:scaleX(1.2000);transform-origin:0 0;-webkit-text-stroke:0.2px currentColor;">-</div>
<div style="position:absolute;left:141.60px;top:965.99px;font:normal 21.5px 'Liberation Sans',sans-serif;line-height:21.5px;color:#111;white-space:nowrap;transform:scaleX(1.0150);transform-origin:0 0;-webkit-text-stroke:0.2px currentColor;">-</div>
<div style="position:absolute;left:1652.08px;top:965.99px;font:normal 21.5px 'Liberation Sans',sans-serif;line-height:21.5px;color:#111;white-space:nowrap;transform:scaleX(1.0150);transform-origin:0 0;-webkit-text-stroke:0.2px currentColor;">Yes</div>
<div style="position:absolute;left:1897.90px;top:965.99px;font:normal 21.5px 'Liberation Sans',sans-serif;line-height:21.5px;color:#111;white-space:nowrap;transform:scaleX(1.2000);transform-origin:0 0;-webkit-text-stroke:0.2px currentColor;">-</div>
<div style="position:absolute;left:2066.90px;top:965.99px;font:normal 21.5px 'Liberation Sans',sans-serif;line-height:21.5px;color:#111;white-space:nowrap;transform:scaleX(1.2000);transform-origin:0 0;-webkit-text-stroke:0.2px currentColor;">-</div>
<div style="position:absolute;left:2235.90px;top:965.99px;font:normal 21.5px 'Liberation Sans',sans-serif;line-height:21.5px;color:#111;white-space:nowrap;transform:scaleX(1.2000);transform-origin:0 0;-webkit-text-stroke:0.2px currentColor;">-</div>
<div style="position:absolute;left:2404.90px;top:965.99px;font:normal 21.5px 'Liberation Sans',sans-serif;line-height:21.5px;color:#111;white-space:nowrap;transform:scaleX(1.2000);transform-origin:0 0;-webkit-text-stroke:0.2px currentColor;">-</div>
<div style="position:absolute;left:2573.90px;top:965.99px;font:normal 21.5px 'Liberation Sans',sans-serif;line-height:21.5px;color:#111;white-space:nowrap;transform:scaleX(1.2000);transform-origin:0 0;-webkit-text-stroke:0.2px currentColor;">-</div>
<div style="position:absolute;left:2742.90px;top:965.99px;font:normal 21.5px 'Liberation Sans',sans-serif;line-height:21.5px;color:#111;white-space:nowrap;transform:scaleX(1.2000);transform-origin:0 0;-webkit-text-stroke:0.2px currentColor;">-</div>
<div style="position:absolute;left:141.60px;top:994.06px;font:normal 21.5px 'Liberation Sans',sans-serif;line-height:21.5px;color:#111;white-space:nowrap;transform:scaleX(1.0150);transform-origin:0 0;-webkit-text-stroke:0.2px currentColor;">-</div>
<div style="position:absolute;left:1652.08px;top:994.06px;font:normal 21.5px 'Liberation Sans',sans-serif;line-height:21.5px;color:#111;white-space:nowrap;transform:scaleX(1.0150);transform-origin:0 0;-webkit-text-stroke:0.2px currentColor;">Yes</div>
<div style="position:absolute;left:1897.90px;top:994.06px;font:normal 21.5px 'Liberation Sans',sans-serif;line-height:21.5px;color:#111;white-space:nowrap;transform:scaleX(1.2000);transform-origin:0 0;-webkit-text-stroke:0.2px currentColor;">-</div>
<div style="position:absolute;left:2066.90px;top:994.06px;font:normal 21.5px 'Liberation Sans',sans-serif;line-height:21.5px;color:#111;white-space:nowrap;transform:scaleX(1.2000);transform-origin:0 0;-webkit-text-stroke:0.2px currentColor;">-</div>
<div style="position:absolute;left:2235.90px;top:994.06px;font:normal 21.5px 'Liberation Sans',sans-serif;line-height:21.5px;color:#111;white-space:nowrap;transform:scaleX(1.2000);transform-origin:0 0;-webkit-text-stroke:0.2px currentColor;">-</div>
<div style="position:absolute;left:2404.90px;top:994.06px;font:normal 21.5px 'Liberation Sans',sans-serif;line-height:21.5px;color:#111;white-space:nowrap;transform:scaleX(1.2000);transform-origin:0 0;-webkit-text-stroke:0.2px currentColor;">-</div>
<div style="position:absolute;left:2573.90px;top:994.06px;font:normal 21.5px 'Liberation Sans',sans-serif;line-height:21.5px;color:#111;white-space:nowrap;transform:scaleX(1.2000);transform-origin:0 0;-webkit-text-stroke:0.2px currentColor;">-</div>
<div style="position:absolute;left:2742.90px;top:994.06px;font:normal 21.5px 'Liberation Sans',sans-serif;line-height:21.5px;color:#111;white-space:nowrap;transform:scaleX(1.2000);transform-origin:0 0;-webkit-text-stroke:0.2px currentColor;">-</div>
<div style="position:absolute;left:141.60px;top:1022.13px;font:normal 21.5px 'Liberation Sans',sans-serif;line-height:21.5px;color:#111;white-space:nowrap;transform:scaleX(1.0150);transform-origin:0 0;-webkit-text-stroke:0.2px currentColor;">-</div>
<div style="position:absolute;left:1652.08px;top:1022.13px;font:normal 21.5px 'Liberation Sans',sans-serif;line-height:21.5px;color:#111;white-space:nowrap;transform:scaleX(1.0150);transform-origin:0 0;-webkit-text-stroke:0.2px currentColor;">Yes</div>
<div style="position:absolute;left:1897.90px;top:1022.13px;font:normal 21.5px 'Liberation Sans',sans-serif;line-height:21.5px;color:#111;white-space:nowrap;transform:scaleX(1.2000);transform-origin:0 0;-webkit-text-stroke:0.2px currentColor;">-</div>
<div style="position:absolute;left:2066.90px;top:1022.13px;font:normal 21.5px 'Liberation Sans',sans-serif;line-height:21.5px;color:#111;white-space:nowrap;transform:scaleX(1.2000);transform-origin:0 0;-webkit-text-stroke:0.2px currentColor;">-</div>
<div style="position:absolute;left:2235.90px;top:1022.13px;font:normal 21.5px 'Liberation Sans',sans-serif;line-height:21.5px;color:#111;white-space:nowrap;transform:scaleX(1.2000);transform-origin:0 0;-webkit-text-stroke:0.2px currentColor;">-</div>
<div style="position:absolute;left:2404.90px;top:1022.13px;font:normal 21.5px 'Liberation Sans',sans-serif;line-height:21.5px;color:#111;white-space:nowrap;transform:scaleX(1.2000);transform-origin:0 0;-webkit-text-stroke:0.2px currentColor;">-</div>
<div style="position:absolute;left:2573.90px;top:1022.13px;font:normal 21.5px 'Liberation Sans',sans-serif;line-height:21.5px;color:#111;white-space:nowrap;transform:scaleX(1.2000);transform-origin:0 0;-webkit-text-stroke:0.2px currentColor;">-</div>
<div style="position:absolute;left:2742.90px;top:1022.13px;font:normal 21.5px 'Liberation Sans',sans-serif;line-height:21.5px;color:#111;white-space:nowrap;transform:scaleX(1.2000);transform-origin:0 0;-webkit-text-stroke:0.2px currentColor;">-</div>
<div style="position:absolute;left:141.60px;top:1050.20px;font:normal 21.5px 'Liberation Sans',sans-serif;line-height:21.5px;color:#111;white-space:nowrap;transform:scaleX(1.0150);transform-origin:0 0;-webkit-text-stroke:0.2px currentColor;">-</div>
<div style="position:absolute;left:1652.08px;top:1050.20px;font:normal 21.5px 'Liberation Sans',sans-serif;line-height:21.5px;color:#111;white-space:nowrap;transform:scaleX(1.0150);transform-origin:0 0;-webkit-text-stroke:0.2px currentColor;">Yes</div>
<div style="position:absolute;left:1897.90px;top:1050.20px;font:normal 21.5px 'Liberation Sans',sans-serif;line-height:21.5px;color:#111;white-space:nowrap;transform:scaleX(1.2000);transform-origin:0 0;-webkit-text-stroke:0.2px currentColor;">-</div>
<div style="position:absolute;left:2066.90px;top:1050.20px;font:normal 21.5px 'Liberation Sans',sans-serif;line-height:21.5px;color:#111;white-space:nowrap;transform:scaleX(1.2000);transform-origin:0 0;-webkit-text-stroke:0.2px currentColor;">-</div>
<div style="position:absolute;left:2235.90px;top:1050.20px;font:normal 21.5px 'Liberation Sans',sans-serif;line-height:21.5px;color:#111;white-space:nowrap;transform:scaleX(1.2000);transform-origin:0 0;-webkit-text-stroke:0.2px currentColor;">-</div>
<div style="position:absolute;left:2404.90px;top:1050.20px;font:normal 21.5px 'Liberation Sans',sans-serif;line-height:21.5px;color:#111;white-space:nowrap;transform:scaleX(1.2000);transform-origin:0 0;-webkit-text-stroke:0.2px currentColor;">-</div>
<div style="position:absolute;left:2573.90px;top:1050.20px;font:normal 21.5px 'Liberation Sans',sans-serif;line-height:21.5px;color:#111;white-space:nowrap;transform:scaleX(1.2000);transform-origin:0 0;-webkit-text-stroke:0.2px currentColor;">-</div>
<div style="position:absolute;left:2742.90px;top:1050.20px;font:normal 21.5px 'Liberation Sans',sans-serif;line-height:21.5px;color:#111;white-space:nowrap;transform:scaleX(1.2000);transform-origin:0 0;-webkit-text-stroke:0.2px currentColor;">-</div>
<div style="position:absolute;left:141.60px;top:1078.27px;font:normal 21.5px 'Liberation Sans',sans-serif;line-height:21.5px;color:#111;white-space:nowrap;transform:scaleX(1.0150);transform-origin:0 0;-webkit-text-stroke:0.2px currentColor;">-</div>
<div style="position:absolute;left:1652.08px;top:1078.27px;font:normal 21.5px 'Liberation Sans',sans-serif;line-height:21.5px;color:#111;white-space:nowrap;transform:scaleX(1.0150);transform-origin:0 0;-webkit-text-stroke:0.2px currentColor;">Yes</div>
<div style="position:absolute;left:1897.90px;top:1078.27px;font:normal 21.5px 'Liberation Sans',sans-serif;line-height:21.5px;color:#111;white-space:nowrap;transform:scaleX(1.2000);transform-origin:0 0;-webkit-text-stroke:0.2px currentColor;">-</div>
<div style="position:absolute;left:2066.90px;top:1078.27px;font:normal 21.5px 'Liberation Sans',sans-serif;line-height:21.5px;color:#111;white-space:nowrap;transform:scaleX(1.2000);transform-origin:0 0;-webkit-text-stroke:0.2px currentColor;">-</div>
<div style="position:absolute;left:2235.90px;top:1078.27px;font:normal 21.5px 'Liberation Sans',sans-serif;line-height:21.5px;color:#111;white-space:nowrap;transform:scaleX(1.2000);transform-origin:0 0;-webkit-text-stroke:0.2px currentColor;">-</div>
<div style="position:absolute;left:2404.90px;top:1078.27px;font:normal 21.5px 'Liberation Sans',sans-serif;line-height:21.5px;color:#111;white-space:nowrap;transform:scaleX(1.2000);transform-origin:0 0;-webkit-text-stroke:0.2px currentColor;">-</div>
<div style="position:absolute;left:2573.90px;top:1078.27px;font:normal 21.5px 'Liberation Sans',sans-serif;line-height:21.5px;color:#111;white-space:nowrap;transform:scaleX(1.2000);transform-origin:0 0;-webkit-text-stroke:0.2px currentColor;">-</div>
<div style="position:absolute;left:2742.90px;top:1078.27px;font:normal 21.5px 'Liberation Sans',sans-serif;line-height:21.5px;color:#111;white-space:nowrap;transform:scaleX(1.2000);transform-origin:0 0;-webkit-text-stroke:0.2px currentColor;">-</div>
<div style="position:absolute;left:141.60px;top:1106.34px;font:normal 21.5px 'Liberation Sans',sans-serif;line-height:21.5px;color:#111;white-space:nowrap;transform:scaleX(1.0150);transform-origin:0 0;-webkit-text-stroke:0.2px currentColor;">-</div>
<div style="position:absolute;left:1652.08px;top:1106.34px;font:normal 21.5px 'Liberation Sans',sans-serif;line-height:21.5px;color:#111;white-space:nowrap;transform:scaleX(1.0150);transform-origin:0 0;-webkit-text-stroke:0.2px currentColor;">Yes</div>
<div style="position:absolute;left:1897.90px;top:1106.34px;font:normal 21.5px 'Liberation Sans',sans-serif;line-height:21.5px;color:#111;white-space:nowrap;transform:scaleX(1.2000);transform-origin:0 0;-webkit-text-stroke:0.2px currentColor;">-</div>
<div style="position:absolute;left:2066.90px;top:1106.34px;font:normal 21.5px 'Liberation Sans',sans-serif;line-height:21.5px;color:#111;white-space:nowrap;transform:scaleX(1.2000);transform-origin:0 0;-webkit-text-stroke:0.2px currentColor;">-</div>
<div style="position:absolute;left:2235.90px;top:1106.34px;font:normal 21.5px 'Liberation Sans',sans-serif;line-height:21.5px;color:#111;white-space:nowrap;transform:scaleX(1.2000);transform-origin:0 0;-webkit-text-stroke:0.2px currentColor;">-</div>
<div style="position:absolute;left:2404.90px;top:1106.34px;font:normal 21.5px 'Liberation Sans',sans-serif;line-height:21.5px;color:#111;white-space:nowrap;transform:scaleX(1.2000);transform-origin:0 0;-webkit-text-stroke:0.2px currentColor;">-</div>
<div style="position:absolute;left:2573.90px;top:1106.34px;font:normal 21.5px 'Liberation Sans',sans-serif;line-height:21.5px;color:#111;white-space:nowrap;transform:scaleX(1.2000);transform-origin:0 0;-webkit-text-stroke:0.2px currentColor;">-</div>
<div style="position:absolute;left:2742.90px;top:1106.34px;font:normal 21.5px 'Liberation Sans',sans-serif;line-height:21.5px;color:#111;white-space:nowrap;transform:scaleX(1.2000);transform-origin:0 0;-webkit-text-stroke:0.2px currentColor;">-</div>
<div style="position:absolute;left:141.60px;top:1134.41px;font:normal 21.5px 'Liberation Sans',sans-serif;line-height:21.5px;color:#111;white-space:nowrap;transform:scaleX(1.0150);transform-origin:0 0;-webkit-text-stroke:0.2px currentColor;">-</div>
<div style="position:absolute;left:1652.08px;top:1134.41px;font:normal 21.5px 'Liberation Sans',sans-serif;line-height:21.5px;color:#111;white-space:nowrap;transform:scaleX(1.0150);transform-origin:0 0;-webkit-text-stroke:0.2px currentColor;">Yes</div>
<div style="position:absolute;left:1897.90px;top:1134.41px;font:normal 21.5px 'Liberation Sans',sans-serif;line-height:21.5px;color:#111;white-space:nowrap;transform:scaleX(1.2000);transform-origin:0 0;-webkit-text-stroke:0.2px currentColor;">-</div>
<div style="position:absolute;left:2066.90px;top:1134.41px;font:normal 21.5px 'Liberation Sans',sans-serif;line-height:21.5px;color:#111;white-space:nowrap;transform:scaleX(1.2000);transform-origin:0 0;-webkit-text-stroke:0.2px currentColor;">-</div>
<div style="position:absolute;left:2235.90px;top:1134.41px;font:normal 21.5px 'Liberation Sans',sans-serif;line-height:21.5px;color:#111;white-space:nowrap;transform:scaleX(1.2000);transform-origin:0 0;-webkit-text-stroke:0.2px currentColor;">-</div>
<div style="position:absolute;left:2404.90px;top:1134.41px;font:normal 21.5px 'Liberation Sans',sans-serif;line-height:21.5px;color:#111;white-space:nowrap;transform:scaleX(1.2000);transform-origin:0 0;-webkit-text-stroke:0.2px currentColor;">-</div>
<div style="position:absolute;left:2573.90px;top:1134.41px;font:normal 21.5px 'Liberation Sans',sans-serif;line-height:21.5px;color:#111;white-space:nowrap;transform:scaleX(1.2000);transform-origin:0 0;-webkit-text-stroke:0.2px currentColor;">-</div>
<div style="position:absolute;left:2742.90px;top:1134.41px;font:normal 21.5px 'Liberation Sans',sans-serif;line-height:21.5px;color:#111;white-space:nowrap;transform:scaleX(1.2000);transform-origin:0 0;-webkit-text-stroke:0.2px currentColor;">-</div>
<div style="position:absolute;left:141.60px;top:1162.48px;font:normal 21.5px 'Liberation Sans',sans-serif;line-height:21.5px;color:#111;white-space:nowrap;transform:scaleX(1.0150);transform-origin:0 0;-webkit-text-stroke:0.2px currentColor;">-</div>
<div style="position:absolute;left:1652.08px;top:1162.48px;font:normal 21.5px 'Liberation Sans',sans-serif;line-height:21.5px;color:#111;white-space:nowrap;transform:scaleX(1.0150);transform-origin:0 0;-webkit-text-stroke:0.2px currentColor;">Yes</div>
<div style="position:absolute;left:1897.90px;top:1162.48px;font:normal 21.5px 'Liberation Sans',sans-serif;line-height:21.5px;color:#111;white-space:nowrap;transform:scaleX(1.2000);transform-origin:0 0;-webkit-text-stroke:0.2px currentColor;">-</div>
<div style="position:absolute;left:2066.90px;top:1162.48px;font:normal 21.5px 'Liberation Sans',sans-serif;line-height:21.5px;color:#111;white-space:nowrap;transform:scaleX(1.2000);transform-origin:0 0;-webkit-text-stroke:0.2px currentColor;">-</div>
<div style="position:absolute;left:2235.90px;top:1162.48px;font:normal 21.5px 'Liberation Sans',sans-serif;line-height:21.5px;color:#111;white-space:nowrap;transform:scaleX(1.2000);transform-origin:0 0;-webkit-text-stroke:0.2px currentColor;">-</div>
<div style="position:absolute;left:2404.90px;top:1162.48px;font:normal 21.5px 'Liberation Sans',sans-serif;line-height:21.5px;color:#111;white-space:nowrap;transform:scaleX(1.2000);transform-origin:0 0;-webkit-text-stroke:0.2px currentColor;">-</div>
<div style="position:absolute;left:2573.90px;top:1162.48px;font:normal 21.5px 'Liberation Sans',sans-serif;line-height:21.5px;color:#111;white-space:nowrap;transform:scaleX(1.2000);transform-origin:0 0;-webkit-text-stroke:0.2px currentColor;">-</div>
<div style="position:absolute;left:2742.90px;top:1162.48px;font:normal 21.5px 'Liberation Sans',sans-serif;line-height:21.5px;color:#111;white-space:nowrap;transform:scaleX(1.2000);transform-origin:0 0;-webkit-text-stroke:0.2px currentColor;">-</div>
<div style="position:absolute;left:141.60px;top:1190.55px;font:normal 21.5px 'Liberation Sans',sans-serif;line-height:21.5px;color:#111;white-space:nowrap;transform:scaleX(1.0150);transform-origin:0 0;-webkit-text-stroke:0.2px currentColor;">-</div>
<div style="position:absolute;left:1652.08px;top:1190.55px;font:normal 21.5px 'Liberation Sans',sans-serif;line-height:21.5px;color:#111;white-space:nowrap;transform:scaleX(1.0150);transform-origin:0 0;-webkit-text-stroke:0.2px currentColor;">Yes</div>
<div style="position:absolute;left:1897.90px;top:1190.55px;font:normal 21.5px 'Liberation Sans',sans-serif;line-height:21.5px;color:#111;white-space:nowrap;transform:scaleX(1.2000);transform-origin:0 0;-webkit-text-stroke:0.2px currentColor;">-</div>
<div style="position:absolute;left:2066.90px;top:1190.55px;font:normal 21.5px 'Liberation Sans',sans-serif;line-height:21.5px;color:#111;white-space:nowrap;transform:scaleX(1.2000);transform-origin:0 0;-webkit-text-stroke:0.2px currentColor;">-</div>
<div style="position:absolute;left:2235.90px;top:1190.55px;font:normal 21.5px 'Liberation Sans',sans-serif;line-height:21.5px;color:#111;white-space:nowrap;transform:scaleX(1.2000);transform-origin:0 0;-webkit-text-stroke:0.2px currentColor;">-</div>
<div style="position:absolute;left:2404.90px;top:1190.55px;font:normal 21.5px 'Liberation Sans',sans-serif;line-height:21.5px;color:#111;white-space:nowrap;transform:scaleX(1.2000);transform-origin:0 0;-webkit-text-stroke:0.2px currentColor;">-</div>
<div style="position:absolute;left:2573.90px;top:1190.55px;font:normal 21.5px 'Liberation Sans',sans-serif;line-height:21.5px;color:#111;white-space:nowrap;transform:scaleX(1.2000);transform-origin:0 0;-webkit-text-stroke:0.2px currentColor;">-</div>
<div style="position:absolute;left:2742.90px;top:1190.55px;font:normal 21.5px 'Liberation Sans',sans-serif;line-height:21.5px;color:#111;white-space:nowrap;transform:scaleX(1.2000);transform-origin:0 0;-webkit-text-stroke:0.2px currentColor;">-</div>
<div style="position:absolute;left:138.00px;top:1212.40px;width:2722.00px;height:35.20px;background:#4ab1e6;"></div>
<div style="position:absolute;left:143.00px;top:1214.55px;font:bold 29.5px 'Liberation Sans',sans-serif;line-height:29.5px;color:#fff;white-space:nowrap;transform:scaleX(1.0555);transform-origin:0 0;-webkit-text-stroke:0.35px currentColor;">Total</div>
<div style="position:absolute;left:1462.38px;top:1220.25px;font:bold 21.5px 'Liberation Sans',sans-serif;line-height:21.5px;color:#fff;white-space:nowrap;transform:scaleX(1.1500);transform-origin:0 0;-webkit-text-stroke:0.35px currentColor;">152,000</div>
<div style="position:absolute;left:1852.33px;top:1220.25px;font:bold 21.5px 'Liberation Sans',sans-serif;line-height:21.5px;color:#fff;white-space:nowrap;transform:scaleX(1.1500);transform-origin:0 0;-webkit-text-stroke:0.35px currentColor;">22,500</div>
<div style="position:absolute;left:2021.33px;top:1220.25px;font:bold 21.5px 'Liberation Sans',sans-serif;line-height:21.5px;color:#fff;white-space:nowrap;transform:scaleX(1.1500);transform-origin:0 0;-webkit-text-stroke:0.35px currentColor;">32,500</div>
<div style="position:absolute;left:2190.33px;top:1220.25px;font:bold 21.5px 'Liberation Sans',sans-serif;line-height:21.5px;color:#fff;white-space:nowrap;transform:scaleX(1.1500);transform-origin:0 0;-webkit-text-stroke:0.35px currentColor;">52,500</div>
<div style="position:absolute;left:2359.33px;top:1220.25px;font:bold 21.5px 'Liberation Sans',sans-serif;line-height:21.5px;color:#fff;white-space:nowrap;transform:scaleX(1.1500);transform-origin:0 0;-webkit-text-stroke:0.35px currentColor;">16,500</div>
<div style="position:absolute;left:2542.08px;top:1220.25px;font:bold 21.5px 'Liberation Sans',sans-serif;line-height:21.5px;color:#fff;white-space:nowrap;transform:scaleX(1.1500);transform-origin:0 0;-webkit-text-stroke:0.35px currentColor;">6,500</div>
<div style="position:absolute;left:2711.08px;top:1220.25px;font:bold 21.5px 'Liberation Sans',sans-serif;line-height:21.5px;color:#fff;white-space:nowrap;transform:scaleX(1.1500);transform-origin:0 0;-webkit-text-stroke:0.35px currentColor;">2,500</div>
<div style="position:absolute;left:94.74px;top:1307.15px;font:bold 38.7px 'Liberation Sans',sans-serif;line-height:38.7px;color:#262626;white-space:nowrap;transform:scaleX(1.0577);transform-origin:0 0;-webkit-text-stroke:0.8px currentColor;">Startup Costs Depreciation, $</div>
<div style="position:absolute;left:138.00px;top:1372.70px;width:2722.00px;height:28.30px;background:#4ab1e6;"></div>
<div style="position:absolute;left:138.00px;top:1456.70px;width:2722.00px;height:28.30px;background:#4ab1e6;"></div>
<div style="position:absolute;left:138.00px;top:1526.70px;width:2722.00px;height:28.30px;background:#4ab1e6;"></div>
<div style="position:absolute;left:138.00px;top:1582.70px;width:2722.00px;height:28.30px;background:#4ab1e6;"></div>
<div style="position:absolute;left:142.60px;top:1377.95px;font:bold 21.5px 'Liberation Sans',sans-serif;line-height:21.5px;color:#fff;white-space:nowrap;transform:scaleX(1.0700);transform-origin:0 0;-webkit-text-stroke:0.35px currentColor;">Opening Net Book Value</div>
<div style="position:absolute;left:1891.45px;top:1377.95px;font:bold 21.5px 'Liberation Sans',sans-serif;line-height:21.5px;color:#fff;white-space:nowrap;transform:scaleX(1.3000);transform-origin:0 0;-webkit-text-stroke:0.35px currentColor;">-</div>
<div style="position:absolute;left:2021.33px;top:1377.95px;font:bold 21.5px 'Liberation Sans',sans-serif;line-height:21.5px;color:#fff;white-space:nowrap;transform:scaleX(1.1500);transform-origin:0 0;-webkit-text-stroke:0.35px currentColor;">22,313</div>
<div style="position:absolute;left:2190.33px;top:1377.95px;font:bold 21.5px 'Liberation Sans',sans-serif;line-height:21.5px;color:#fff;white-space:nowrap;transform:scaleX(1.1500);transform-origin:0 0;-webkit-text-stroke:0.35px currentColor;">54,354</div>
<div style="position:absolute;left:2345.58px;top:1377.95px;font:bold 21.5px 'Liberation Sans',sans-serif;line-height:21.5px;color:#fff;white-space:nowrap;transform:scaleX(1.1500);transform-origin:0 0;-webkit-text-stroke:0.35px currentColor;">105,958</div>
<div style="position:absolute;left:2514.58px;top:1377.95px;font:bold 21.5px 'Liberation Sans',sans-serif;line-height:21.5px;color:#fff;white-space:nowrap;transform:scaleX(1.1500);transform-origin:0 0;-webkit-text-stroke:0.35px currentColor;">121,425</div>
<div style="position:absolute;left:2683.58px;top:1377.95px;font:bold 21.5px 'Liberation Sans',sans-serif;line-height:21.5px;color:#fff;white-space:nowrap;transform:scaleX(1.1500);transform-origin:0 0;-webkit-text-stroke:0.35px currentColor;">126,838</div>
<div style="position:absolute;left:2852.58px;top:1377.95px;font:bold 21.5px 'Liberation Sans',sans-serif;line-height:21.5px;color:#fff;white-space:nowrap;transform:scaleX(1.1500);transform-origin:0 0;-webkit-text-stroke:0.35px currentColor;">128,229</div>
<div style="position:absolute;left:161.89px;top:1404.95px;font:normal 21.5px 'Liberation Sans',sans-serif;line-height:21.5px;color:#111;white-space:nowrap;transform:scaleX(1.0150);transform-origin:0 0;-webkit-text-stroke:0.2px currentColor;">Expenditure - Amortizable</div>
<div style="position:absolute;left:1728.90px;top:1404.95px;font:normal 21.5px 'Liberation Sans',sans-serif;line-height:21.5px;color:#111;white-space:nowrap;transform:scaleX(1.2000);transform-origin:0 0;-webkit-text-stroke:0.2px currentColor;">-</div>
<div style="position:absolute;left:1865.58px;top:1404.95px;font:normal 21.5px 'Liberation Sans',sans-serif;line-height:21.5px;color:#111;white-space:nowrap;transform:scaleX(0.9850);transform-origin:0 0;-webkit-text-stroke:0.2px currentColor;">22,500</div>
<div style="position:absolute;left:2034.58px;top:1404.95px;font:normal 21.5px 'Liberation Sans',sans-serif;line-height:21.5px;color:#111;white-space:nowrap;transform:scaleX(0.9850);transform-origin:0 0;-webkit-text-stroke:0.2px currentColor;">32,500</div>
<div style="position:absolute;left:2203.58px;top:1404.95px;font:normal 21.5px 'Liberation Sans',sans-serif;line-height:21.5px;color:#111;white-space:nowrap;transform:scaleX(0.9850);transform-origin:0 0;-webkit-text-stroke:0.2px currentColor;">52,500</div>
<div style="position:absolute;left:2372.58px;top:1404.95px;font:normal 21.5px 'Liberation Sans',sans-serif;line-height:21.5px;color:#111;white-space:nowrap;transform:scaleX(0.9850);transform-origin:0 0;-webkit-text-stroke:0.2px currentColor;">16,500</div>
<div style="position:absolute;left:2553.36px;top:1404.95px;font:normal 21.5px 'Liberation Sans',sans-serif;line-height:21.5px;color:#111;white-space:nowrap;transform:scaleX(0.9850);transform-origin:0 0;-webkit-text-stroke:0.2px currentColor;">6,500</div>
<div style="position:absolute;left:2722.36px;top:1404.95px;font:normal 21.5px 'Liberation Sans',sans-serif;line-height:21.5px;color:#111;white-space:nowrap;transform:scaleX(0.9850);transform-origin:0 0;-webkit-text-stroke:0.2px currentColor;">2,500</div>
<div style="position:absolute;left:161.89px;top:1432.95px;font:normal 21.5px 'Liberation Sans',sans-serif;line-height:21.5px;color:#111;white-space:nowrap;transform:scaleX(1.0150);transform-origin:0 0;-webkit-text-stroke:0.2px currentColor;">Depreciation (Depreciation Period (Years) - 10)</div>
<div style="position:absolute;left:1895.02px;top:1432.95px;font:normal 21.5px 'Liberation Sans',sans-serif;line-height:21.5px;color:#111;white-space:nowrap;transform:scaleX(0.9850);transform-origin:0 0;-webkit-text-stroke:0.2px currentColor;">188</div>
<div style="position:absolute;left:2064.02px;top:1432.95px;font:normal 21.5px 'Liberation Sans',sans-serif;line-height:21.5px;color:#111;white-space:nowrap;transform:scaleX(0.9850);transform-origin:0 0;-webkit-text-stroke:0.2px currentColor;">458</div>
<div style="position:absolute;left:2233.02px;top:1432.95px;font:normal 21.5px 'Liberation Sans',sans-serif;line-height:21.5px;color:#111;white-space:nowrap;transform:scaleX(0.9850);transform-origin:0 0;-webkit-text-stroke:0.2px currentColor;">896</div>
<div style="position:absolute;left:2384.36px;top:1432.95px;font:normal 21.5px 'Liberation Sans',sans-serif;line-height:21.5px;color:#111;white-space:nowrap;transform:scaleX(0.9850);transform-origin:0 0;-webkit-text-stroke:0.2px currentColor;">1,033</div>
<div style="position:absolute;left:2553.36px;top:1432.95px;font:normal 21.5px 'Liberation Sans',sans-serif;line-height:21.5px;color:#111;white-space:nowrap;transform:scaleX(0.9850);transform-origin:0 0;-webkit-text-stroke:0.2px currentColor;">1,088</div>
<div style="position:absolute;left:2722.36px;top:1432.95px;font:normal 21.5px 'Liberation Sans',sans-serif;line-height:21.5px;color:#111;white-space:nowrap;transform:scaleX(0.9850);transform-origin:0 0;-webkit-text-stroke:0.2px currentColor;">1,108</div>
<div style="position:absolute;left:142.60px;top:1461.95px;font:bold 21.5px 'Liberation Sans',sans-serif;line-height:21.5px;color:#fff;white-space:nowrap;transform:scaleX(1.0700);transform-origin:0 0;-webkit-text-stroke:0.35px currentColor;">Closing Net Book Value</div>
<div style="position:absolute;left:1722.45px;top:1461.95px;font:bold 21.5px 'Liberation Sans',sans-serif;line-height:21.5px;color:#fff;white-space:nowrap;transform:scaleX(1.3000);transform-origin:0 0;-webkit-text-stroke:0.35px currentColor;">-</div>
<div style="position:absolute;left:1852.33px;top:1461.95px;font:bold 21.5px 'Liberation Sans',sans-serif;line-height:21.5px;color:#fff;white-space:nowrap;transform:scaleX(1.1500);transform-origin:0 0;-webkit-text-stroke:0.35px currentColor;">22,313</div>
<div style="position:absolute;left:2021.33px;top:1461.95px;font:bold 21.5px 'Liberation Sans',sans-serif;line-height:21.5px;color:#fff;white-space:nowrap;transform:scaleX(1.1500);transform-origin:0 0;-webkit-text-stroke:0.35px currentColor;">54,354</div>
<div style="position:absolute;left:2176.58px;top:1461.95px;font:bold 21.5px 'Liberation Sans',sans-serif;line-height:21.5px;color:#fff;white-space:nowrap;transform:scaleX(1.1500);transform-origin:0 0;-webkit-text-stroke:0.35px currentColor;">105,958</div>
<div style="position:absolute;left:2345.58px;top:1461.95px;font:bold 21.5px 'Liberation Sans',sans-serif;line-height:21.5px;color:#fff;white-space:nowrap;transform:scaleX(1.1500);transform-origin:0 0;-webkit-text-stroke:0.35px currentColor;">121,425</div>
<div style="position:absolute;left:2514.58px;top:1461.95px;font:bold 21.5px 'Liberation Sans',sans-serif;line-height:21.5px;color:#fff;white-space:nowrap;transform:scaleX(1.1500);transform-origin:0 0;-webkit-text-stroke:0.35px currentColor;">126,838</div>
<div style="position:absolute;left:2683.58px;top:1461.95px;font:bold 21.5px 'Liberation Sans',sans-serif;line-height:21.5px;color:#fff;white-space:nowrap;transform:scaleX(1.1500);transform-origin:0 0;-webkit-text-stroke:0.35px currentColor;">128,229</div>
<div style="position:absolute;left:2852.58px;top:1461.95px;font:bold 21.5px 'Liberation Sans',sans-serif;line-height:21.5px;color:#fff;white-space:nowrap;transform:scaleX(1.1500);transform-origin:0 0;-webkit-text-stroke:0.35px currentColor;">127,108</div>
<div style="position:absolute;left:142.60px;top:1531.95px;font:bold 21.5px 'Liberation Sans',sans-serif;line-height:21.5px;color:#fff;white-space:nowrap;transform:scaleX(1.0700);transform-origin:0 0;-webkit-text-stroke:0.35px currentColor;">Opening Net Book Value</div>
<div style="position:absolute;left:1891.45px;top:1531.95px;font:bold 21.5px 'Liberation Sans',sans-serif;line-height:21.5px;color:#fff;white-space:nowrap;transform:scaleX(1.3000);transform-origin:0 0;-webkit-text-stroke:0.35px currentColor;">-</div>
<div style="position:absolute;left:2060.45px;top:1531.95px;font:bold 21.5px 'Liberation Sans',sans-serif;line-height:21.5px;color:#fff;white-space:nowrap;transform:scaleX(1.3000);transform-origin:0 0;-webkit-text-stroke:0.35px currentColor;">-</div>
<div style="position:absolute;left:2229.45px;top:1531.95px;font:bold 21.5px 'Liberation Sans',sans-serif;line-height:21.5px;color:#fff;white-space:nowrap;transform:scaleX(1.3000);transform-origin:0 0;-webkit-text-stroke:0.35px currentColor;">-</div>
<div style="position:absolute;left:2398.45px;top:1531.95px;font:bold 21.5px 'Liberation Sans',sans-serif;line-height:21.5px;color:#fff;white-space:nowrap;transform:scaleX(1.3000);transform-origin:0 0;-webkit-text-stroke:0.35px currentColor;">-</div>
<div style="position:absolute;left:2567.45px;top:1531.95px;font:bold 21.5px 'Liberation Sans',sans-serif;line-height:21.5px;color:#fff;white-space:nowrap;transform:scaleX(1.3000);transform-origin:0 0;-webkit-text-stroke:0.35px currentColor;">-</div>
<div style="position:absolute;left:2736.45px;top:1531.95px;font:bold 21.5px 'Liberation Sans',sans-serif;line-height:21.5px;color:#fff;white-space:nowrap;transform:scaleX(1.3000);transform-origin:0 0;-webkit-text-stroke:0.35px currentColor;">-</div>
<div style="position:absolute;left:161.89px;top:1558.95px;font:normal 21.5px 'Liberation Sans',sans-serif;line-height:21.5px;color:#111;white-space:nowrap;transform:scaleX(1.0150);transform-origin:0 0;-webkit-text-stroke:0.2px currentColor;">Expenditure - Non-Amortizable</div>
<div style="position:absolute;left:1897.90px;top:1558.95px;font:normal 21.5px 'Liberation Sans',sans-serif;line-height:21.5px;color:#111;white-space:nowrap;transform:scaleX(1.2000);transform-origin:0 0;-webkit-text-stroke:0.2px currentColor;">-</div>
<div style="position:absolute;left:2066.90px;top:1558.95px;font:normal 21.5px 'Liberation Sans',sans-serif;line-height:21.5px;color:#111;white-space:nowrap;transform:scaleX(1.2000);transform-origin:0 0;-webkit-text-stroke:0.2px currentColor;">-</div>
<div style="position:absolute;left:2235.90px;top:1558.95px;font:normal 21.5px 'Liberation Sans',sans-serif;line-height:21.5px;color:#111;white-space:nowrap;transform:scaleX(1.2000);transform-origin:0 0;-webkit-text-stroke:0.2px currentColor;">-</div>
<div style="position:absolute;left:2404.90px;top:1558.95px;font:normal 21.5px 'Liberation Sans',sans-serif;line-height:21.5px;color:#111;white-space:nowrap;transform:scaleX(1.2000);transform-origin:0 0;-webkit-text-stroke:0.2px currentColor;">-</div>
<div style="position:absolute;left:2573.90px;top:1558.95px;font:normal 21.5px 'Liberation Sans',sans-serif;line-height:21.5px;color:#111;white-space:nowrap;transform:scaleX(1.2000);transform-origin:0 0;-webkit-text-stroke:0.2px currentColor;">-</div>
<div style="position:absolute;left:2742.90px;top:1558.95px;font:normal 21.5px 'Liberation Sans',sans-serif;line-height:21.5px;color:#111;white-space:nowrap;transform:scaleX(1.2000);transform-origin:0 0;-webkit-text-stroke:0.2px currentColor;">-</div>
<div style="position:absolute;left:142.60px;top:1587.95px;font:bold 21.5px 'Liberation Sans',sans-serif;line-height:21.5px;color:#fff;white-space:nowrap;transform:scaleX(1.0700);transform-origin:0 0;-webkit-text-stroke:0.35px currentColor;">Closing Net Book Value</div>
<div style="position:absolute;left:1891.45px;top:1587.95px;font:bold 21.5px 'Liberation Sans',sans-serif;line-height:21.5px;color:#fff;white-space:nowrap;transform:scaleX(1.3000);transform-origin:0 0;-webkit-text-stroke:0.35px currentColor;">-</div>
<div style="position:absolute;left:2060.45px;top:1587.95px;font:bold 21.5px 'Liberation Sans',sans-serif;line-height:21.5px;color:#fff;white-space:nowrap;transform:scaleX(1.3000);transform-origin:0 0;-webkit-text-stroke:0.35px currentColor;">-</div>
<div style="position:absolute;left:2229.45px;top:1587.95px;font:bold 21.5px 'Liberation Sans',sans-serif;line-height:21.5px;color:#fff;white-space:nowrap;transform:scaleX(1.3000);transform-origin:0 0;-webkit-text-stroke:0.35px currentColor;">-</div>
<div style="position:absolute;left:2398.45px;top:1587.95px;font:bold 21.5px 'Liberation Sans',sans-serif;line-height:21.5px;color:#fff;white-space:nowrap;transform:scaleX(1.3000);transform-origin:0 0;-webkit-text-stroke:0.35px currentColor;">-</div>
<div style="position:absolute;left:2567.45px;top:1587.95px;font:bold 21.5px 'Liberation Sans',sans-serif;line-height:21.5px;color:#fff;white-space:nowrap;transform:scaleX(1.3000);transform-origin:0 0;-webkit-text-stroke:0.35px currentColor;">-</div>
<div style="position:absolute;left:2736.45px;top:1587.95px;font:bold 21.5px 'Liberation Sans',sans-serif;line-height:21.5px;color:#fff;white-space:nowrap;transform:scaleX(1.3000);transform-origin:0 0;-webkit-text-stroke:0.35px currentColor;">-</div>
<div style="position:absolute;left:1772.50px;top:1212.40px;width:1.00px;height:35.20px;background:#72a9c6;"></div>
<div style="position:absolute;left:1772.50px;top:1372.70px;width:1.00px;height:28.30px;background:#72a9c6;"></div>
<div style="position:absolute;left:1772.50px;top:1456.70px;width:1.00px;height:28.30px;background:#72a9c6;"></div>
<div style="position:absolute;left:1772.50px;top:1526.70px;width:1.00px;height:28.30px;background:#72a9c6;"></div>
<div style="position:absolute;left:1772.50px;top:1582.70px;width:1.00px;height:28.30px;background:#72a9c6;"></div>
<div style="position:absolute;left:1771.60px;top:651.30px;width:0.90px;height:561.10px;background:#ffffff;"></div>
<div style="position:absolute;left:2860.00px;top:278.00px;width:31.00px;height:1392.00px;background:#0a0a0a;"></div>
<div style="position:absolute;left:2891.00px;top:0.00px;width:11.00px;height:1762.00px;background:#000000;"></div>
<div style="position:absolute;left:815.00px;top:1669.50px;width:120.00px;height:10.00px;background:#fffef8;"></div>
<div style="position:absolute;left:770.00px;top:1670.00px;width:61.50px;height:14.00px;background:#0a0a0a;border-top-right-radius:7px;"></div>
<div style="position:absolute;left:919.80px;top:1670.00px;width:60.00px;height:14.00px;background:#0a0a0a;border-top-left-radius:7px;"></div>
<div style="position:absolute;left:11.00px;top:1670.00px;width:815.00px;height:1.00px;background:#222222;"></div>
<div style="position:absolute;left:925.00px;top:1670.00px;width:1935.00px;height:1.00px;background:#222222;"></div>
<div style="position:absolute;left:189.18px;top:1684.95px;font:normal 20.5px 'Liberation Sans',sans-serif;line-height:20.5px;color:#f4f4f4;white-space:nowrap;transform:scaleX(1.0186);transform-origin:0 0;">Contents</div>
<div style="position:absolute;left:299.00px;top:1676.30px;width:128.00px;height:35.40px;background:#fde96c;border-radius:6px;"></div>
<div style="position:absolute;left:312.89px;top:1685.75px;font:normal 20.5px 'Liberation Sans',sans-serif;line-height:20.5px;color:#1b1b1b;white-space:nowrap;transform:scaleX(1.0062);transform-origin:0 0;">Dashboard</div>
<div style="position:absolute;left:439.80px;top:1676.30px;width:106.20px;height:35.40px;background:#fde96c;border-radius:6px;"></div>
<div style="position:absolute;left:453.53px;top:1685.75px;font:normal 20.5px 'Liberation Sans',sans-serif;line-height:20.5px;color:#1b1b1b;white-space:nowrap;transform:scaleX(0.9695);transform-origin:0 0;">Revenue</div>
<div style="position:absolute;left:558.80px;top:1676.30px;width:157.70px;height:35.40px;background:#fde96c;border-radius:6px;"></div>
<div style="position:absolute;left:570.97px;top:1685.75px;font:normal 20.5px 'Liberation Sans',sans-serif;line-height:20.5px;color:#1b1b1b;white-space:nowrap;transform:scaleX(0.9250);transform-origin:0 0;">COGS &amp; OPEX</div>
<div style="position:absolute;left:729.90px;top:1676.30px;width:89.30px;height:35.40px;background:#fde96c;border-radius:6px;"></div>
<div style="position:absolute;left:742.81px;top:1685.75px;font:normal 20.5px 'Liberation Sans',sans-serif;line-height:20.5px;color:#1b1b1b;white-space:nowrap;transform:scaleX(0.9933);transform-origin:0 0;">Payroll</div>
<div style="position:absolute;left:932.00px;top:1676.30px;width:112.80px;height:35.40px;background:#fde96c;border-radius:6px;"></div>
<div style="position:absolute;left:944.81px;top:1685.75px;font:normal 20.5px 'Liberation Sans',sans-serif;line-height:20.5px;color:#1b1b1b;white-space:nowrap;transform:scaleX(0.9940);transform-origin:0 0;">CapTable</div>
<div style="position:absolute;left:1058.00px;top:1676.30px;width:90.00px;height:35.40px;background:#fde96c;border-radius:6px;"></div>
<div style="position:absolute;left:1069.98px;top:1685.75px;font:normal 20.5px 'Liberation Sans',sans-serif;line-height:20.5px;color:#1b1b1b;white-space:nowrap;transform:scaleX(1.0183);transform-origin:0 0;">Capital</div>
<div style="position:absolute;left:1161.00px;top:1676.30px;width:41.60px;height:35.40px;background:#4fb2e8;border-radius:6px;"></div>
<div style="position:absolute;left:1173.86px;top:1685.75px;font:normal 20.5px 'Liberation Sans',sans-serif;line-height:20.5px;color:#1b1b1b;white-space:nowrap;transform:scaleX(0.8420);transform-origin:0 0;">IS</div>
<div style="position:absolute;left:1216.00px;top:1676.30px;width:48.00px;height:35.40px;background:#4fb2e8;border-radius:6px;"></div>
<div style="position:absolute;left:1228.14px;top:1685.75px;font:normal 20.5px 'Liberation Sans',sans-serif;line-height:20.5px;color:#1b1b1b;white-space:nowrap;transform:scaleX(0.8642);transform-origin:0 0;">CF</div>
<div style="position:absolute;left:1277.30px;top:1676.30px;width:47.10px;height:35.40px;background:#4fb2e8;border-radius:6px;"></div>
<div style="position:absolute;left:1290.18px;top:1685.75px;font:normal 20.5px 'Liberation Sans',sans-serif;line-height:20.5px;color:#1b1b1b;white-space:nowrap;transform:scaleX(0.8180);transform-origin:0 0;">BS</div>
<div style="position:absolute;left:1338.00px;top:1676.30px;width:114.60px;height:35.40px;background:#4fb2e8;border-radius:6px;"></div>
<div style="position:absolute;left:1352.00px;top:1685.75px;font:normal 20.5px 'Liberation Sans',sans-serif;line-height:20.5px;color:#1b1b1b;white-space:nowrap;transform:scaleX(0.9526);transform-origin:0 0;">Scenarios</div>
<div style="position:absolute;left:1466.20px;top:1676.30px;width:114.60px;height:35.40px;background:#4fb2e8;border-radius:6px;"></div>
<div style="position:absolute;left:1479.20px;top:1685.75px;font:normal 20.5px 'Liberation Sans',sans-serif;line-height:20.5px;color:#1b1b1b;white-space:nowrap;transform:scaleX(1.0412);transform-origin:0 0;">Valuation</div>
<div style="position:absolute;left:1594.50px;top:1676.30px;width:113.00px;height:35.40px;background:#4fb2e8;border-radius:6px;"></div>
<div style="position:absolute;left:1608.40px;top:1685.75px;font:normal 20.5px 'Liberation Sans',sans-serif;line-height:20.5px;color:#1b1b1b;white-space:nowrap;transform:scaleX(0.9790);transform-origin:0 0;">Summary</div>
<div style="position:absolute;left:1721.00px;top:1676.30px;width:47.80px;height:35.40px;background:#4fb2e8;border-radius:6px;"></div>
<div style="position:absolute;left:1733.88px;top:1685.75px;font:normal 20.5px 'Liberation Sans',sans-serif;line-height:20.5px;color:#1b1b1b;white-space:nowrap;transform:scaleX(0.8219);transform-origin:0 0;">BE</div>
<div style="position:absolute;left:1782.00px;top:1676.30px;width:71.60px;height:35.40px;background:#4fb2e8;border-radius:6px;"></div>
<div style="position:absolute;left:1794.90px;top:1685.75px;font:normal 20.5px 'Liberation Sans',sans-serif;line-height:20.5px;color:#1b1b1b;white-space:nowrap;transform:scaleX(0.9000);transform-origin:0 0;">ROIC</div>
<div style="position:absolute;left:1867.20px;top:1676.30px;width:84.40px;height:35.40px;background:#4fb2e8;border-radius:6px;"></div>
<div style="position:absolute;left:1879.22px;top:1685.75px;font:normal 20.5px 'Liberation Sans',sans-serif;line-height:20.5px;color:#1b1b1b;white-space:nowrap;transform:scaleX(0.9775);transform-origin:0 0;">Charts</div>
<div style="position:absolute;left:1965.30px;top:1676.30px;width:63.30px;height:35.40px;background:#4fb2e8;border-radius:6px;"></div>
<div style="position:absolute;left:1977.72px;top:1685.75px;font:normal 20.5px 'Liberation Sans',sans-serif;line-height:20.5px;color:#1b1b1b;white-space:nowrap;transform:scaleX(0.8801);transform-origin:0 0;">KPIs</div>
<div style="position:absolute;left:292.00px;top:1680.50px;width:1.20px;height:27.00px;background:#4a4a4a;"></div>
<div style="position:absolute;left:432.60px;top:1680.50px;width:1.20px;height:27.00px;background:#4a4a4a;"></div>
<div style="position:absolute;left:552.00px;top:1680.50px;width:1.20px;height:27.00px;background:#4a4a4a;"></div>
<div style="position:absolute;left:722.80px;top:1680.50px;width:1.20px;height:27.00px;background:#4a4a4a;"></div>
<div style="position:absolute;left:824.40px;top:1680.50px;width:1.20px;height:27.00px;background:#4a4a4a;"></div>
<div style="position:absolute;left:925.00px;top:1680.50px;width:1.20px;height:27.00px;background:#4a4a4a;"></div>
<div style="position:absolute;left:1050.70px;top:1680.50px;width:1.20px;height:27.00px;background:#4a4a4a;"></div>
<div style="position:absolute;left:1153.90px;top:1680.50px;width:1.20px;height:27.00px;background:#4a4a4a;"></div>
<div style="position:absolute;left:1208.40px;top:1680.50px;width:1.20px;height:27.00px;background:#4a4a4a;"></div>
<div style="position:absolute;left:1269.90px;top:1680.50px;width:1.20px;height:27.00px;background:#4a4a4a;"></div>
<div style="position:absolute;left:1330.90px;top:1680.50px;width:1.20px;height:27.00px;background:#4a4a4a;"></div>
<div style="position:absolute;left:1459.10px;top:1680.50px;width:1.20px;height:27.00px;background:#4a4a4a;"></div>
<div style="position:absolute;left:1587.40px;top:1680.50px;width:1.20px;height:27.00px;background:#4a4a4a;"></div>
<div style="position:absolute;left:1714.00px;top:1680.50px;width:1.20px;height:27.00px;background:#4a4a4a;"></div>
<div style="position:absolute;left:1775.00px;top:1680.50px;width:1.20px;height:27.00px;background:#4a4a4a;"></div>
<div style="position:absolute;left:1860.10px;top:1680.50px;width:1.20px;height:27.00px;background:#4a4a4a;"></div>
<div style="position:absolute;left:1958.20px;top:1680.50px;width:1.20px;height:27.00px;background:#4a4a4a;"></div>
<div style="position:absolute;left:2035.40px;top:1680.50px;width:1.20px;height:27.00px;background:#4a4a4a;"></div>
<div style="position:absolute;left:2042.5px;top:1676.3px;width:29.5px;height:35.4px;overflow:hidden;"><div style="position:absolute;left:0;top:0;width:60px;height:35.4px;background:#4fb2e8;border-radius:6px"></div><div style="position:absolute;left:11px;top:9.3px;font:20.5px 'Liberation Sans';line-height:20.5px;color:#1b1b1b;white-space:nowrap">Sc</div></div>
<div style="position:absolute;left:831.5px;top:1669.7px;width:88.3px;height:42.3px;background:linear-gradient(#ffffff,#fdf8dc);border-radius:0 0 6px 6px;"></div>
<div style="position:absolute;left:844.50px;top:1679.55px;font:bold 20.5px 'Liberation Sans',sans-serif;line-height:20.5px;color:#222;white-space:nowrap;transform:scaleX(0.8780);transform-origin:0 0;">CAPEX</div>
<div style="position:absolute;left:844.30px;top:1705.30px;width:62.80px;height:2.80px;background:#1e7d3e;"></div>
<div style="position:absolute;left:26.36px;top:1727.10px;font:normal 16px 'Liberation Sans',sans-serif;line-height:16px;color:#e8e8e8;white-space:nowrap;transform:scaleX(0.9392);transform-origin:0 0;">Ready</div>
<div style="position:absolute;left:173.40px;top:1726.35px;font:bold 16.5px 'Liberation Sans',sans-serif;line-height:16.5px;color:#f0f0f0;white-space:nowrap;transform:scaleX(0.9503);transform-origin:0 0;">Accessibility: Investigate</div>
<svg style="position:absolute;left:0.00px;top:0.00px;pointer-events:none;" width="2902" height="1762" viewBox="0 0 2902 1762"><path d="M55 1686 L47 1693 L55 1700" fill="none" stroke="#9a9a9a" stroke-width="1.6"/><path d="M95.8 1686 L103.8 1693 L95.8 1700" fill="none" stroke="#9a9a9a" stroke-width="1.6"/><circle cx="2089.5" cy="1692.5" r="2.1" fill="#e6e6e6"/><circle cx="2095.5" cy="1692.5" r="2.1" fill="#e6e6e6"/><circle cx="2101.5" cy="1692.5" r="2.1" fill="#e6e6e6"/><path d="M2143.2 1684.5 V1701.5 M2134.7 1693 H2151.7" stroke="#e6e6e6" stroke-width="1.6"/><circle cx="2192" cy="1688.5" r="1.6" fill="#e6e6e6"/><circle cx="2192" cy="1694.5" r="1.6" fill="#e6e6e6"/><circle cx="2192" cy="1700.5" r="1.6" fill="#e6e6e6"/><rect x="2216" y="1680" width="644" height="26" rx="13" fill="#161616"/><path d="M2234 1686.5 L2226 1693 L2234 1699.5 Z" fill="#9c9c9c" stroke="#9c9c9c" stroke-width="1.5" stroke-linejoin="round"/><path d="M2844 1686.5 L2852 1693 L2844 1699.5 Z" fill="#9c9c9c" stroke="#9c9c9c" stroke-width="1.5" stroke-linejoin="round"/><rect x="2242" y="1687" width="55" height="12.5" rx="6.2" fill="#a0a0a0"/><rect x="2863" y="280" width="26" height="1391" rx="13" fill="#161616"/><path d="M2869.8 295.5 L2876 286.5 L2882.2 295.5 Z" fill="#9c9c9c" stroke="#9c9c9c" stroke-width="1.5" stroke-linejoin="round"/><path d="M2869.8 1654.5 L2876 1663.5 L2882.2 1654.5 Z" fill="#9c9c9c" stroke="#9c9c9c" stroke-width="1.5" stroke-linejoin="round"/><rect x="2870" y="304" width="12" height="1311" rx="6" fill="#a0a0a0"/><rect x="99.6" y="1727" width="20.5" height="17.6" fill="none" stroke="#e0e0e0" stroke-width="1.4"/><path d="M99.6 1731 H120 M103 1735 H108 M103 1739 H107" stroke="#e0e0e0" stroke-width="1.3"/><circle cx="114" cy="1740" r="5.5" fill="#141414" stroke="#e0e0e0" stroke-width="1.4"/><circle cx="114" cy="1740" r="2.4" fill="#e0e0e0"/><circle cx="154.5" cy="1727.5" r="2.6" fill="none" stroke="#ececec" stroke-width="1.6"/><path d="M146.8 1730.5 Q148.5 1733.5 152 1733.2 Q155 1733 158 1733.2 Q161.5 1733.5 163 1730.3" fill="none" stroke="#ececec" stroke-width="1.8" stroke-linecap="round"/><path d="M152.3 1733.5 L151.8 1738.5 L148.5 1744.5 M157.2 1733.5 L157 1737.5" fill="none" stroke="#ececec" stroke-width="1.8" stroke-linecap="round"/><path d="M159.5 1738.5 L166.5 1745.5 M166.5 1738.5 L159.5 1745.5" stroke="#ececec" stroke-width="1.6"/><rect x="2445" y="1718.5" width="60" height="31.5" fill="#262626"/><rect x="2464" y="1724.5" width="20" height="19.5" fill="none" stroke="#e8e8e8" stroke-width="1.4"/><path d="M2470.7 1724.5 V1744 M2477.3 1724.5 V1744 M2464 1731 H2484 M2464 1737.5 H2484" stroke="#e8e8e8" stroke-width="1.4"/><rect x="2524.5" y="1724.5" width="21" height="19.5" fill="none" stroke="#e8e8e8" stroke-width="1.4"/><rect x="2528.5" y="1728" width="13" height="12.5" fill="none" stroke="#e8e8e8" stroke-width="1.2"/><path d="M2531 1731.5 H2539 M2531 1734.2 H2539 M2531 1737 H2539" stroke="#e8e8e8" stroke-width="1"/><rect x="2584.3" y="1724.5" width="21.3" height="19.5" fill="none" stroke="#e8e8e8" stroke-width="1.4"/><path d="M2591 1724.5 V1734 H2598 V1724.5" fill="none" stroke="#e8e8e8" stroke-width="1.4"/><path d="M2633 1734 H2645" stroke="#d8d8d8" stroke-width="1.4"/><rect x="2653" y="1733.3" width="148" height="1.6" fill="#a8a8a8"/><rect x="2726.5" y="1729.5" width="1.4" height="9" fill="#a8a8a8"/><rect x="2732.8" y="1726" width="8.5" height="17" fill="#b8b8b8"/><path d="M2809 1734.5 H2820.5 M2814.75 1729 V1740" stroke="#d8d8d8" stroke-width="1.4"/></svg>
<div style="position:absolute;left:2838.66px;top:1726.75px;font:normal 16.5px 'Liberation Sans',sans-serif;line-height:16.5px;color:#e8e8e8;white-space:nowrap;transform:scaleX(0.9391);transform-origin:0 0;">140%</div>
</body></html>
